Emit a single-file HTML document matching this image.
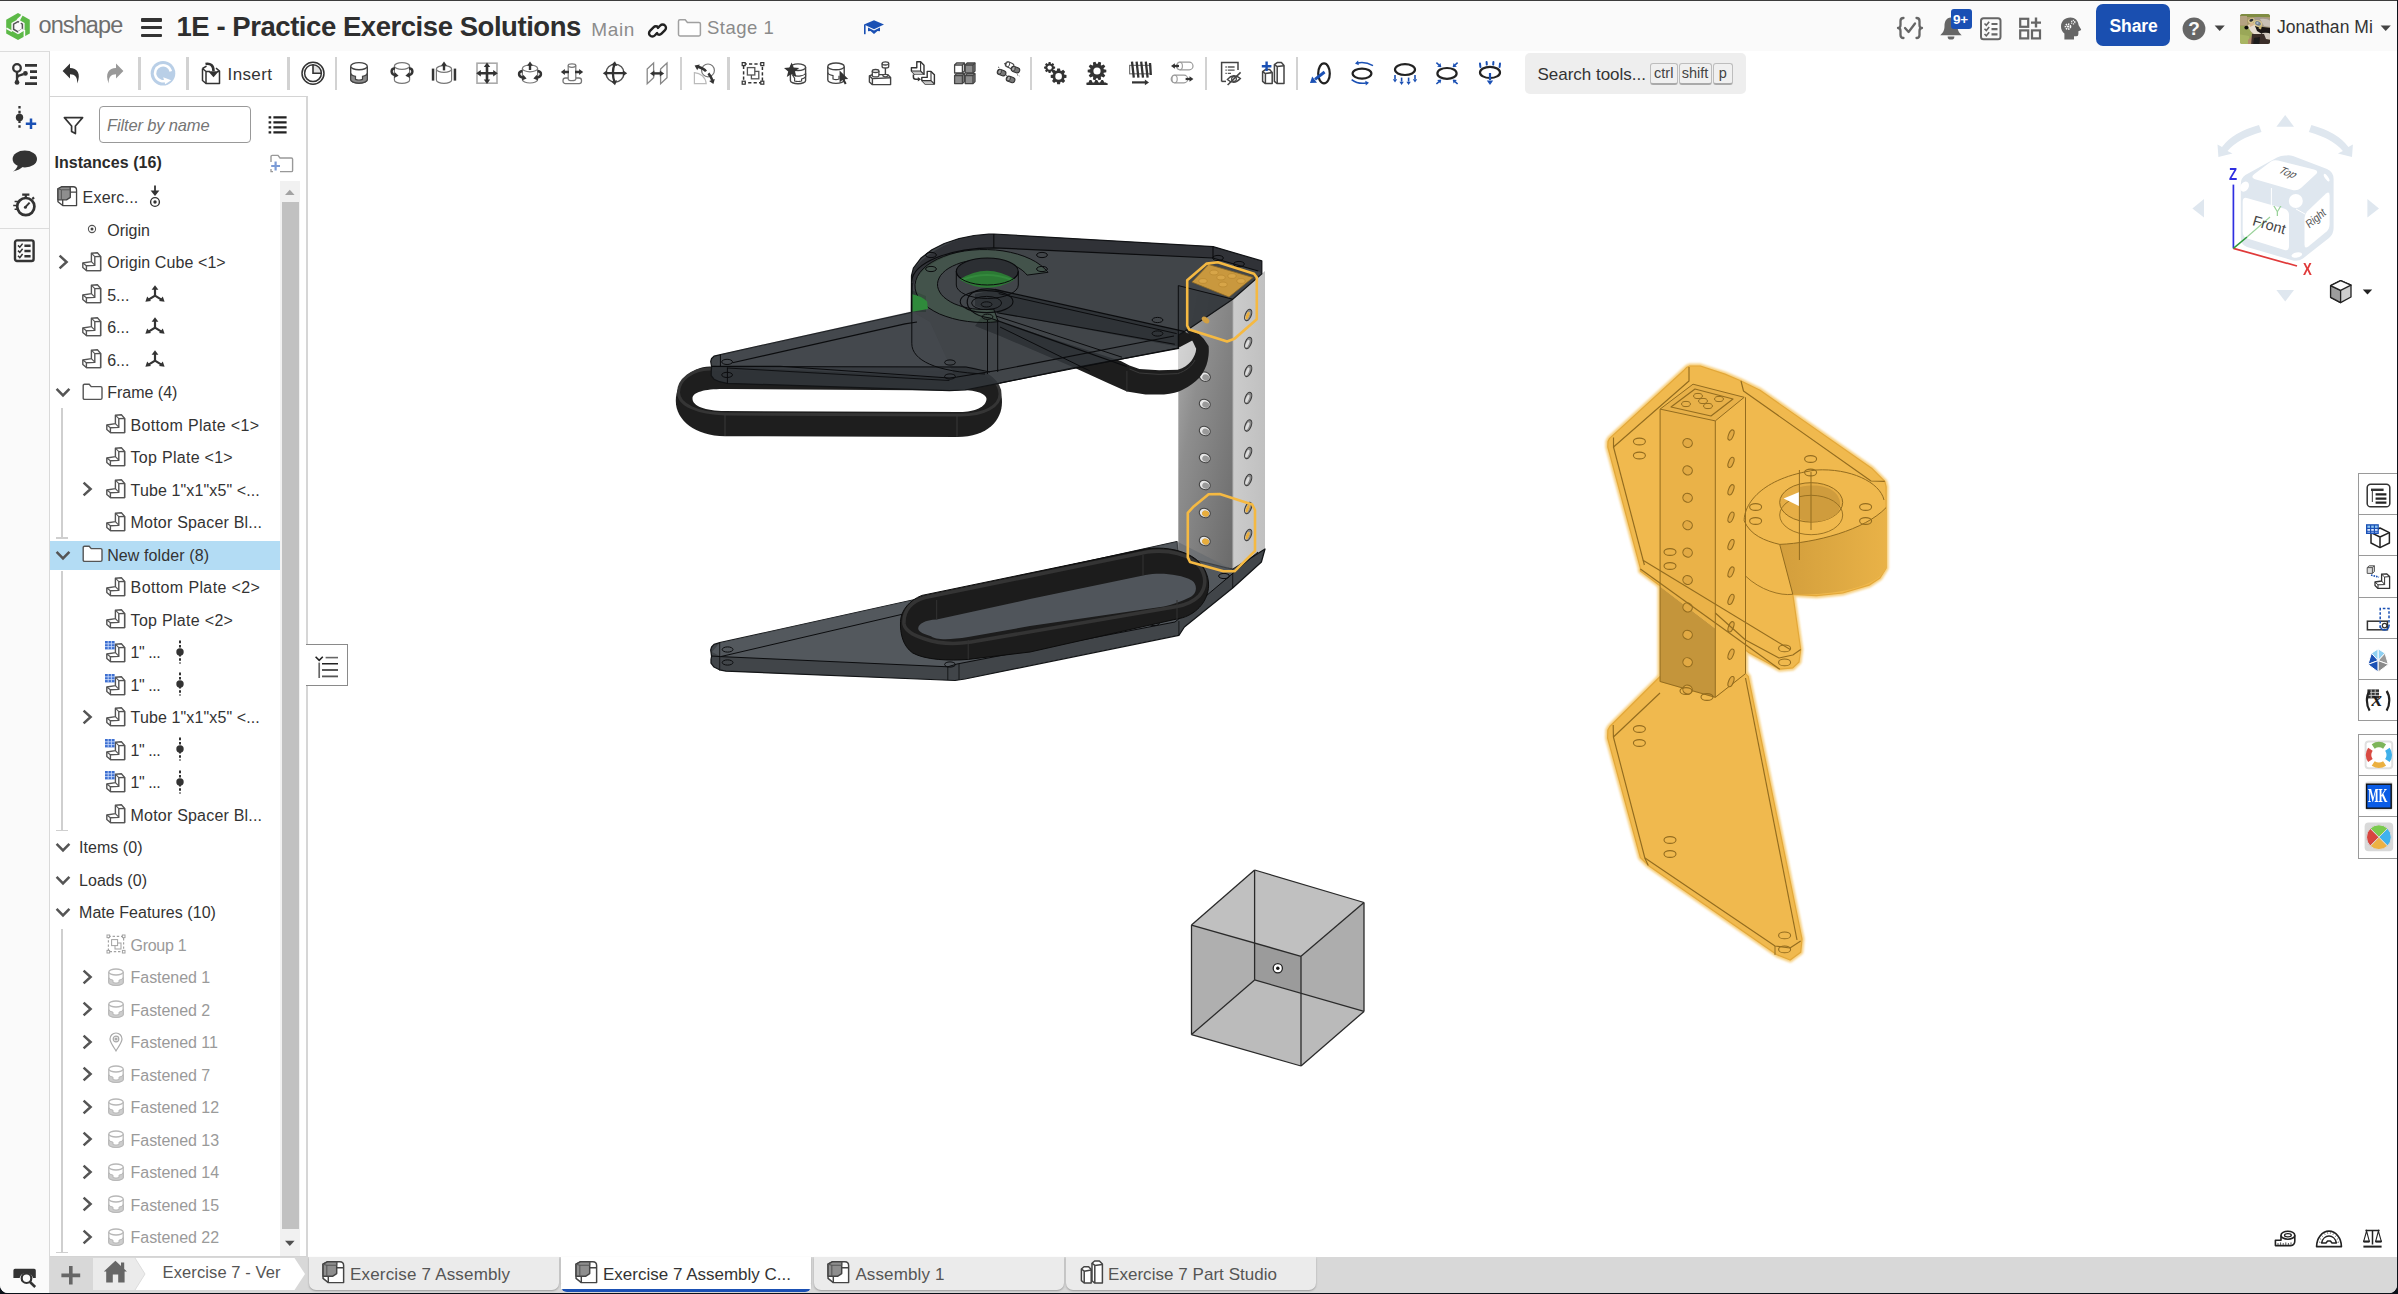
<!DOCTYPE html>
<html><head><meta charset="utf-8"><title>Onshape</title>
<style>
*{box-sizing:border-box;margin:0;padding:0}
html,body{width:2398px;height:1294px;overflow:hidden;background:#0b1119;font-family:"Liberation Sans",sans-serif;}
#win{position:absolute;left:0;top:0;width:2397px;height:1293px;background:#fff;border-radius:0 0 8px 8px;overflow:hidden}
.abs{position:absolute}
.t{position:absolute;white-space:nowrap;line-height:20px;height:20px;color:#333;font-size:16px}
#topline{position:absolute;left:0;top:0;width:2398px;height:1px;background:#3c3c3c}
#hdr{position:absolute;left:0;top:1px;width:2397px;height:50px;background:#fafafa}
#strip{position:absolute;left:0;top:51px;width:50px;height:1242px;background:#fafafa;border-right:1px solid #d9d9d9;border-top:1px solid #dcdcdc}
#toolbar{position:absolute;left:50px;top:51px;width:2347px;height:45px;background:#fff}
#panel{position:absolute;left:50px;top:96px;width:258px;height:1161px;background:#fff;border-top:1px solid #d4d4d4;border-right:2px solid #d6d6d6;border-bottom:1px solid #d4d4d4}
#tabs{position:absolute;left:50px;top:1257px;width:2347px;height:36px;background:#d8d8d8}
.sep{position:absolute;top:57px;height:33px;width:3px;background:#d2d2d2}
.sep2{position:absolute;top:57px;height:33px;width:2px;background:#d2d2d2}
.row{position:absolute;left:0;width:229px;height:32px}
svg{position:absolute;overflow:visible}
.tab{position:absolute;top:1px;height:33px;background:#ebebeb;border-radius:0 0 6px 6px;box-shadow:0 1px 2px rgba(0,0,0,.25)}
.kbd{position:absolute;top:63px;height:22px;border:1px solid #bdbdbd;border-bottom:2px solid #aaa;border-radius:3px;background:#f0f0f0;font-size:14.5px;color:#444;text-align:center;line-height:19px}
</style></head><body>
<div id="win">
<div id="topline"></div>
<div id="hdr"></div>
<div id="toolbar"></div>
<div id="strip"></div>
<div id="panel"></div>
<div id="tabs"></div>
<svg style="left:5px;top:12px" width="26" height="28" viewBox="0 0 26 28">
<polygon points="13,1 24.8,7.8 24.8,21.4 13,28 1.2,21.4 1.2,7.8" fill="#5cb947"/>
<polygon points="13,7.2 19.6,11 19.6,18.4 13,22.2 6.4,18.4 6.4,11" fill="#fafafa"/>
<path d="M13 1 L13 -1 M16.5 3 L13.5 8.5 L11.5 7.5 Z" fill="#fafafa"/>
<path d="M17.2 2.6 L14.2 8" stroke="#fafafa" stroke-width="1.6"/>
<path d="M1.4 16.2 L7 19.4" stroke="#fafafa" stroke-width="1.6"/>
<path d="M19.4 25 L19.4 18" stroke="#fafafa" stroke-width="1.6"/>
<polygon points="13,9.6 17.4,12.1 17.4,17.2 13,19.8 8.6,17.2 8.6,12.1" fill="none" stroke="#555" stroke-width="1.5"/>
<path d="M15.5 9.5 L13 14.5" stroke="#fafafa" stroke-width="2"/>
<path d="M17.8 17.4 L13.5 20.6" stroke="#fafafa" stroke-width="2.2"/>
</svg>
<div class="t" style="left:38.50px;top:13.71px;font-size:23.5px;line-height:23.5px;height:23.5px;color:#6e6e6e;letter-spacing:-0.9px;">onshape</div>
<div class="abs" style="left:141px;top:18px;width:21px;height:3.6px;background:#333;border-radius:1px"></div><div class="abs" style="left:141px;top:25.8px;width:21px;height:3.6px;background:#333;border-radius:1px"></div><div class="abs" style="left:141px;top:33.5px;width:21px;height:3.6px;background:#333;border-radius:1px"></div>
<div class="t" style="left:176.50px;top:13.32px;font-size:27.5px;line-height:27.5px;height:27.5px;color:#2e2e2e;font-weight:bold;letter-spacing:-0.45px;">1E - Practice Exercise Solutions</div>
<div class="t" style="left:591.30px;top:19.92px;font-size:19px;line-height:19px;height:19px;color:#8c8c8c;letter-spacing:0.6px;">Main</div>
<svg style="left:647px;top:19px" width="21" height="20" viewBox="0 0 21 20"><g fill="none" stroke="#222" stroke-width="2.4" stroke-linecap="round">
<path d="M8.6 11.6 L6.2 14 a3.3 3.3 0 0 1 -4.7 -4.7 L5 5.8 a3.3 3.3 0 0 1 4.7 0" transform="translate(1.5,2.5)"/>
<path d="M9.4 6.4 L11.8 4 a3.3 3.3 0 0 1 4.7 4.7 L13 12.2 a3.3 3.3 0 0 1 -4.7 0" transform="translate(1.5,2.5)"/>
</g></svg>
<svg style="left:677px;top:18px" width="25" height="20" viewBox="0 0 25 20"><path d="M1.5 3.2 Q1.5 1.8 3 1.8 L8.2 1.8 L10.4 4.4 L22 4.4 Q23.4 4.4 23.4 5.8 L23.4 16.6 Q23.4 18 22 18 L3 18 Q1.5 18 1.5 16.6 Z" fill="#fff" stroke="#a0a0a0" stroke-width="1.5"/></svg>
<div class="t" style="left:707.00px;top:18.94px;font-size:18.5px;line-height:18.5px;height:18.5px;color:#8a8a8a;letter-spacing:0.5px;">Stage 1</div>
<svg style="left:863px;top:19px" width="22" height="18" viewBox="0 0 22 18"><g fill="#1a50b4"><polygon points="11,1.2 21,5.6 11,10.2 1,5.6"/>
<path d="M5 8.6 L11 11.4 L17 8.6 L17 12.2 L14.5 12 L11 15 L7.5 12 L5 12.2 Z"/>
<rect x="1" y="5.6" width="1.6" height="9.6"/></g></svg>
<svg style="left:1896px;top:16px" width="28" height="25" viewBox="0 0 28 25"><g fill="none" stroke="#666" stroke-width="2.3" stroke-linecap="round" stroke-linejoin="round">
<path d="M7.5 2 Q4.5 2 4.5 5 L4.5 9 Q4.5 12 2 12 Q4.5 12 4.5 15 L4.5 19 Q4.5 22 7.5 22"/>
<path d="M20.5 2 Q23.5 2 23.5 5 L23.5 9 Q23.5 12 26 12 Q23.5 12 23.5 15 L23.5 19 Q23.5 22 20.5 22"/>
<path d="M9 12 L12.6 16 L19 7.5"/></g></svg>
<svg style="left:1939px;top:17px" width="24" height="24" viewBox="0 0 24 24"><path d="M12 0.5 C7 0.5 5.5 5 5.5 9 C5.5 14 3.5 16 1.2 18.2 L22.8 18.2 C20.5 16 18.5 14 18.5 9 C18.5 5 17 0.5 12 0.5 Z" fill="#666"/><path d="M8.6 19.4 a3.4 3.2 0 0 0 6.8 0 Z" fill="#666"/></svg>
<div class="abs" style="left:1951px;top:9px;width:20.5px;height:20px;background:#1a50b4;border-radius:3px"></div><div class="t" style="left:1953.00px;top:13.17px;font-size:13.5px;line-height:13.5px;height:13.5px;color:#fff;font-weight:bold;letter-spacing:-0.3px;">9+</div>
<svg style="left:1979px;top:16px" width="24" height="25" viewBox="0 0 24 25"><g fill="none" stroke="#666" stroke-width="2"><rect x="2" y="2.2" width="19.5" height="21" rx="2.5"/>
<path d="M5.5 7.5 L7.3 9.3 L10.2 5.8 M5.5 12.8 L7.3 14.6 L10.2 11 M5.5 18 L7.3 19.8 L10.2 16.3" stroke-width="1.6"/>
<path d="M12.5 8 L18.5 8 M12.5 13.2 L18.5 13.2 M12.5 18.4 L18.5 18.4" stroke-width="2.2"/></g></svg>
<svg style="left:2018px;top:16px" width="26" height="25" viewBox="0 0 26 25"><g fill="none" stroke="#666" stroke-width="2.2"><rect x="2.2" y="2.8" width="8" height="8"/><rect x="2.2" y="14.4" width="8" height="8"/><rect x="14" y="14.4" width="8" height="8"/>
<path d="M18 1.6 L18 11.6 M13 6.6 L23 6.6" stroke-width="2.4"/></g></svg>
<svg style="left:2059px;top:16px" width="24" height="25" viewBox="0 0 24 25"><path d="M11.5 1.6 C5.6 1.6 2 5.6 2 10.4 C2 13.6 3.4 15.8 5.4 17.4 L5.4 23.4 L15 23.4 L15 20.2 L17.4 20.2 Q19.4 20.2 19.4 18 L19.4 15.2 L21.8 14.2 Q22.4 13.8 22 13.2 L19.6 9.2 C19.2 4.6 16 1.6 11.5 1.6 Z" fill="#666"/>
<circle cx="9" cy="10.6" r="2.5" fill="none" stroke="#fafafa" stroke-width="1.7" stroke-dasharray="1.4 0.9"/><circle cx="9" cy="10.6" r="1.1" fill="#fafafa"/>
<circle cx="14.2" cy="6.2" r="1.7" fill="none" stroke="#fafafa" stroke-width="1.3" stroke-dasharray="1 .7"/></svg>
<div class="abs" style="left:2096px;top:4px;width:73.5px;height:42px;background:#1a4fb0;border-radius:7px"></div><div class="t" style="left:2109.50px;top:17.79px;font-size:17.5px;line-height:17.5px;height:17.5px;color:#fff;font-weight:bold;letter-spacing:-0.1px;">Share</div>
<svg style="left:2182px;top:17px" width="24" height="24" viewBox="0 0 24 24"><circle cx="12" cy="11.8" r="11.4" fill="#666"/></svg>
<div class="t" style="left:2188.20px;top:19.32px;font-size:19px;line-height:19px;height:19px;color:#fafafa;font-weight:bold;">?</div>
<svg style="left:2214px;top:25px" width="12" height="7" viewBox="0 0 12 7"><polygon points="0.6,0.6 10.8,0.6 5.7,6" fill="#444"/></svg>
<div class="abs" style="left:2240px;top:14px;width:30px;height:30px;border-radius:2.5px;overflow:hidden;background:#8a8f55"><svg style="left:0;top:0" width="30" height="30" viewBox="0 0 30 30"><defs><filter id="avb" x="-10%" y="-10%" width="120%" height="120%"><feGaussianBlur stdDeviation="0.75"/></filter></defs>
<g filter="url(#avb)"><rect x="-2" y="-2" width="34" height="34" fill="#a99a6e"/>
<rect x="-2" y="-2" width="34" height="5" fill="#7f8c42"/><rect x="-2" y="2" width="9" height="9" fill="#b5a382"/>
<path d="M-2 12 L8 12 L12 20 L11 32 L-2 32 Z" fill="#9aa758"/><path d="M-2 20 L9 22 L10 32 L-2 32 Z" fill="#a8b562"/><path d="M8 26 L12 22 L12 32 L8 32 Z" fill="#b08a6a"/>
<path d="M13 4 Q20 1.5 31 5 L31 14 L20 12 L14 8 Z" fill="#a59a8d"/><path d="M20 5 Q26 4 31 7 L31 13 L24 12 Z" fill="#c9c0b5"/>
<path d="M8 11 Q12 8 15 10 L18 16 L22 20 L14 20 Q9 17 8 11 Z" fill="#e6dcd0"/><path d="M9 10 L13 8 L14 11 L10 13 Z" fill="#d8b58f"/>
<path d="M15 12 L31 14 L31 20 L22 20 L17 17 Z" fill="#1c1917"/>
<path d="M22 19 Q28 18 31 20 L31 26 L24 25 Z" fill="#d3c9c0"/>
<path d="M12 20 L24 20 L26 25 L31 26 L31 32 L11 32 Z" fill="#3a2e29"/><path d="M14 24 L20 23 L19 32 L13 32 Z" fill="#1f1b1a"/>
<ellipse cx="6.4" cy="13.6" rx="2" ry="1.9" fill="#0c0c0c"/>
<ellipse cx="11.4" cy="6.6" rx="3.4" ry="2.5" fill="#d8c78e" transform="rotate(-20 11.4 6.6)"/><ellipse cx="11.4" cy="6.2" rx="2.1" ry="1.3" fill="#2c2d36" transform="rotate(-20 11.4 6.2)"/>
<ellipse cx="18" cy="9.6" rx="4.4" ry="3.3" fill="#d8c78e" transform="rotate(25 18 9.6)"/><ellipse cx="18" cy="9.4" rx="3" ry="2" fill="#6f7e90" transform="rotate(25 18 9.4)"/><ellipse cx="17.4" cy="9" rx="1.2" ry=".8" fill="#c5d2de"/>
<path d="M19 12 L22 11.6 L21 15.6 L18.6 14.4 Z" fill="#cdb877"/></g></svg></div>
<div class="t" style="left:2277.00px;top:18.99px;font-size:17.5px;line-height:17.5px;height:17.5px;color:#333;letter-spacing:0.05px;">Jonathan Mi</div>
<svg style="left:2380px;top:25px" width="12" height="7" viewBox="0 0 12 7"><polygon points="0.6,0.6 10.8,0.6 5.7,6" fill="#444"/></svg>
<div class="sep" style="left:138px"></div><div class="sep" style="left:185.5px"></div><div class="sep" style="left:287px"></div><div class="sep2" style="left:335px"></div><div class="sep2" style="left:680px"></div><div class="sep2" style="left:1030px"></div><div class="sep2" style="left:1205px"></div><div class="sep2" style="left:1295.5px"></div><div class="sep" style="left:727px"></div>
<svg style="left:58.3px;top:60.0px" width="26" height="26" viewBox="0 0 26 26"><path d="M4.6 11 L12 3.6 L12 8 C19 8 23.5 13.5 19.2 23.5 C19.6 17 17 14.2 12 14.2 L12 18.4 Z" fill="#333"/></svg>
<svg style="left:102.3px;top:60.0px" width="26" height="26" viewBox="0 0 26 26"><path d="M21.4 11 L14 3.6 L14 8 C7 8 2.5 13.5 6.8 23.5 C6.4 17 9 14.2 14 14.2 L14 18.4 Z" fill="#999"/></svg>
<svg style="left:149.5px;top:60.0px" width="26" height="26" viewBox="0 0 26 26"><circle cx="13" cy="13.2" r="12.3" fill="#b9cfe7"/>
<path d="M17.6 19.8 A8 8 0 1 1 20.8 11.4" fill="none" stroke="#fff" stroke-width="2.6"/>
<polygon points="13.2,17.2 21.2,20.2 15.2,24.2" fill="#fff"/></svg>
<svg style="left:197.5px;top:60.0px" width="26" height="26" viewBox="0 0 26 26"><g fill="none" stroke="#333" stroke-width="1.5" stroke-linejoin="round">
<path d="M4.5 8.5 L4.5 20.5 L8 23.5 L21.5 23.5 L21.5 11 L18 8.2" fill="#fff"/>
<path d="M4.5 8.5 L8 11.5 L8 23.5 M8 11.5 L12 11.5 M19 11.5 L21.5 11.5 M4.5 8.5 L8.5 6.2"/>
<path d="M7.5 4 C12.5 3 15.5 5.5 15.5 11" stroke-width="2.6"/></g>
<polygon points="10.2,11.2 20.8,11.2 15.5,17.2" fill="#333"/></svg>
<div class="t" style="left:227.60px;top:66.21px;font-size:17px;line-height:17px;height:17px;color:#333;letter-spacing:0.35px;">Insert</div>
<svg style="left:299.5px;top:60.0px" width="26" height="26" viewBox="0 0 26 26"><circle cx="13" cy="13.2" r="11" fill="#fff" stroke="#333" stroke-width="1.5"/>
<path d="M13 13.2 L13 4.8 A8.4 8.4 0 0 1 21.4 13.2 Z" fill="#e2e2e2"/>
<circle cx="13" cy="13.2" r="8.4" fill="none" stroke="#333" stroke-width="1.5"/>
<path d="M13 4.8 L13 13.2 L21.4 13.2" fill="none" stroke="#333" stroke-width="1.6"/></svg>
<svg style="left:346.3px;top:60.0px" width="26" height="26" viewBox="0 0 26 26"><path d="M4.699999999999999 6.2 L4.699999999999999 19.6 A8.3 3.6 0 0 0 21.3 19.6 L21.3 6.2" fill="#fff" stroke="#444" stroke-width="1.4"/><ellipse cx="13" cy="6.2" rx="8.3" ry="3.6" fill="#fff" stroke="#444" stroke-width="1.4"/>
<path d="M4.7 13 L4.7 19.6 A8.3 3.6 0 0 0 21.3 19.6 L21.3 13 A8.3 3.6 0 0 1 16.5 16.3 L16.5 19.4 Q13 20.6 9.5 19.4 L9.5 16.3 A8.3 3.6 0 0 1 4.7 13 Z" fill="#8a8a8a" stroke="#444" stroke-width="1.2"/></svg>
<svg style="left:389.3px;top:60.0px" width="26" height="26" viewBox="0 0 26 26"><path d="M5.4 6 L5.4 20 A7.6 3.4 0 0 0 20.6 20 L20.6 6" fill="#fff" stroke="#777" stroke-width="1.2"/><ellipse cx="13" cy="6" rx="7.6" ry="3.4" fill="#fff" stroke="#777" stroke-width="1.2"/>
<path d="M6 8.2 C1.5 8.6 1.2 14 6.5 15.2" fill="none" stroke="#333" stroke-width="2.4"/><polygon points="9.6,15.8 5.1,18.0 5.9,12.3" fill="#333"/>
<path d="M20 8.2 C24.5 8.6 24.8 14 19.5 15.2" fill="none" stroke="#333" stroke-width="2.4"/><polygon points="16.4,15.8 20.1,12.3 20.9,18.0" fill="#333"/></svg>
<svg style="left:431.3px;top:60.0px" width="26" height="26" viewBox="0 0 26 26"><path d="M5.4 9 L5.4 20 A7.6 3.4 0 0 0 20.6 20 L20.6 9" fill="#fff" stroke="#777" stroke-width="1.2"/><ellipse cx="13" cy="9" rx="7.6" ry="3.4" fill="#fff" stroke="#777" stroke-width="1.2"/>
<rect x="0.8" y="8.6" width="2.5" height="12" fill="#333"/><rect x="22.7" y="8.6" width="2.5" height="12" fill="#333"/>
<path d="M13 10.4 L13 5" stroke="#333" stroke-width="2.4"/><polygon points="13.0,1.4 16.0,5.8 10.0,5.8" fill="#333"/></svg>
<svg style="left:474.3px;top:60.0px" width="26" height="26" viewBox="0 0 26 26"><rect x="3" y="3.2" width="20" height="20" fill="#fff" stroke="#aaa" stroke-width="1.6"/>
<path d="M13 5 L13 21 M5 13.2 L21 13.2" stroke="#333" stroke-width="2.6"/>
<polygon points="13.0,2.4 16.2,7.0 9.8,7.0" fill="#333"/><polygon points="13.0,24.0 9.8,19.4 16.2,19.4" fill="#333"/><polygon points="2.2,13.2 6.8,10.0 6.8,16.4" fill="#333"/><polygon points="23.8,13.2 19.2,16.4 19.2,10.0" fill="#333"/></svg>
<svg style="left:516.5px;top:60.0px" width="26" height="26" viewBox="0 0 26 26"><path d="M5.4 8.4 L5.4 19.6 A7.6 3.4 0 0 0 20.6 19.6 L20.6 8.4" fill="#fff" stroke="#777" stroke-width="1.2"/><ellipse cx="13" cy="8.4" rx="7.6" ry="3.4" fill="#fff" stroke="#777" stroke-width="1.2"/>
<path d="M13 10 L13 5" stroke="#333" stroke-width="2.4"/><polygon points="13.0,1.4 16.0,5.8 10.0,5.8" fill="#333"/>
<path d="M5.4 11 C0.8 11.6 0.8 16.6 6 17.6" fill="none" stroke="#333" stroke-width="2.4"/><polygon points="9.6,18.6 4.9,20.4 6.3,14.8" fill="#333"/>
<path d="M20.6 11 C25.2 11.6 25.2 16.6 20 17.6" fill="none" stroke="#333" stroke-width="2.4"/><polygon points="16.4,18.6 19.7,14.8 21.1,20.4" fill="#333"/></svg>
<svg style="left:559.3px;top:60.0px" width="26" height="26" viewBox="0 0 26 26"><rect x="4" y="18" width="18.5" height="5.6" rx="2.4" fill="#fff" stroke="#777" stroke-width="1.3"/>
<path d="M9.2 5.6 L9.2 19 A3.8 1.7 0 0 0 16.8 19 L16.8 5.6" fill="#fff" stroke="#777" stroke-width="1.2"/><ellipse cx="13" cy="5.6" rx="3.8" ry="1.7" fill="#fff" stroke="#777" stroke-width="1.2"/>
<path d="M5 12 L10 12 M16 12 L21 12" stroke="#333" stroke-width="2.4"/><polygon points="1.8,12.0 5.9,9.1 5.9,14.9" fill="#333"/><polygon points="24.2,12.0 20.1,14.9 20.1,9.1" fill="#333"/></svg>
<svg style="left:601.5px;top:60.0px" width="26" height="26" viewBox="0 0 26 26"><circle cx="13" cy="13.2" r="9" fill="#fff" stroke="#555" stroke-width="1.4"/>
<path d="M13 3 C10.4 9 10.4 17 13 23.4 M3 13.2 L23 13.2" fill="none" stroke="#333" stroke-width="2.3"/>
<polygon points="13.0,1.2 15.1,6.1 9.2,4.9" fill="#333"/><polygon points="13.0,25.2 9.2,21.5 15.1,20.3" fill="#333"/><polygon points="0.8,13.2 5.2,10.2 5.2,16.2" fill="#333"/><polygon points="25.2,13.2 20.8,16.2 20.8,10.2" fill="#333"/></svg>
<svg style="left:644.0px;top:60.0px" width="26" height="26" viewBox="0 0 26 26"><path d="M3.2 9 L9.6 3 L9.6 17.6 L3.2 23.8 Z M16.6 9 L23 3 L23 17.6 L16.6 23.8 Z" fill="#fff" stroke="#888" stroke-width="1.3"/>
<path d="M9 13.4 L17 13.4" stroke="#333" stroke-width="2.4"/><polygon points="6.0,13.4 10.4,10.4 10.4,16.4" fill="#333"/><polygon points="20.2,13.4 15.8,16.4 15.8,10.4" fill="#333"/></svg>
<svg style="left:691.0px;top:60.0px" width="26" height="26" viewBox="0 0 26 26"><path d="M3.4 23.6 L3.4 12.6 C9.5 13 14.5 17 15.2 23.6 Z" fill="#fff" stroke="#bbb" stroke-width="1.2"/>
<circle cx="17" cy="10.4" r="6.4" fill="none" stroke="#777" stroke-width="1.2"/>
<path d="M7 6.8 C11 8 13.6 9.4 15 11.4 M17.4 13.4 C19.6 16 20.6 18.4 21.4 20.4" fill="none" stroke="#333" stroke-width="2.5"/>
<polygon points="3.6,5.6 8.8,4.6 6.3,10.2" fill="#333"/><polygon points="22.4,24.0 18.1,20.9 23.8,18.9" fill="#333"/></svg>
<svg style="left:739.5px;top:60.0px" width="26" height="26" viewBox="0 0 26 26"><rect x="3.6" y="4" width="18.8" height="18.8" fill="none" stroke="#333" stroke-width="1.5" stroke-dasharray="3.2 2.2"/>
<g fill="#fff" stroke="#333" stroke-width="1.2"><rect x="2.2" y="2.6" width="3" height="3"/><rect x="20.8" y="2.6" width="3" height="3"/><rect x="2.2" y="21.2" width="3" height="3"/><rect x="20.8" y="21.2" width="3" height="3"/></g>
<rect x="11.4" y="11.4" width="7.4" height="7.4" fill="#fff" stroke="#555" stroke-width="1.3"/><rect x="7.4" y="7.6" width="7.4" height="7.4" fill="#fff" stroke="#555" stroke-width="1.3"/></svg>
<svg style="left:781.5px;top:60.0px" width="26" height="26" viewBox="0 0 26 26"><path d="M8.4 7.2 L8.4 20.4 A7.6 3.3 0 0 0 23.6 20.4 L23.6 7.2" fill="#fff" stroke="#444" stroke-width="1.4"/><ellipse cx="16" cy="7.2" rx="7.6" ry="3.3" fill="#fff" stroke="#444" stroke-width="1.4"/>
<path d="M10.5 15 A7.6 3.3 0 0 0 23.6 13 L23.6 16.4 A7.6 3.3 0 0 1 19.6 19 L19.6 21 Q16 22 12.6 21 L12.6 18.2 Z" fill="#fff" stroke="#444" stroke-width="1.2"/>
<polygon points="9.6,2.6 11.7,7.6 17.2,8 13,11.6 14.4,17 9.6,14 4.8,17 6.2,11.6 2,8 7.5,7.6" fill="#333"/></svg>
<svg style="left:824.0px;top:60.0px" width="26" height="26" viewBox="0 0 26 26"><path d="M3.8000000000000007 6.4 L3.8000000000000007 20 A8.2 3.4 0 0 0 20.2 20 L20.2 6.4" fill="#fff" stroke="#444" stroke-width="1.4"/><ellipse cx="12" cy="6.4" rx="8.2" ry="3.4" fill="#fff" stroke="#444" stroke-width="1.4"/>
<path d="M3.8 12.5 A8.2 3.4 0 0 0 9 15.6 L9 19 Q12 20.2 15 19 L15 15.8" fill="none" stroke="#444" stroke-width="1.2"/>
<polygon points="15.6,10.4 15.6,22.6 18.4,20 20.8,24.6 22.6,23.6 20.4,19.2 24.2,19" fill="#333"/></svg>
<svg style="left:866.5px;top:60.0px" width="26" height="26" viewBox="0 0 26 26"><g fill="#fff" stroke="#444" stroke-width="1.4" stroke-linejoin="round"><path d="M2.4 16 L2.4 22 L5.4 24.6 L23.6 24.6 L23.6 17.6 L20.6 14.6 L5.4 14.6 Z"/><path d="M2.4 16 L5.4 18.6 L23.6 17.8 M5.4 18.6 L5.4 24.6"/></g>
<path d="M5.3 11 L5.3 15.4 A3.3 1.5 0 0 0 11.899999999999999 15.4 L11.899999999999999 11" fill="#fff" stroke="#444" stroke-width="1.3"/><ellipse cx="8.6" cy="11" rx="3.3" ry="1.5" fill="#fff" stroke="#444" stroke-width="1.3"/>
<path d="M18.4 8 L18.4 14.4" stroke="#444" stroke-width="1.4"/><ellipse cx="18.4" cy="15.6" rx="2.6" ry="1.2" fill="#fff" stroke="#444" stroke-width="1.2"/>
<path d="M15.099999999999998 3.4 L15.099999999999998 6.4 A3.3 1.6 0 0 0 21.7 6.4 L21.7 3.4" fill="#fff" stroke="#444" stroke-width="1.3"/><ellipse cx="18.4" cy="3.4" rx="3.3" ry="1.6" fill="#fff" stroke="#444" stroke-width="1.3"/></svg>
<svg style="left:909.5px;top:60.0px" width="26" height="26" viewBox="0 0 26 26"><g transform="translate(0.6,1)" stroke="#333" stroke-width="1.4" stroke-linejoin="round"><path d="M6.2 0.8 L10 0.8 L13.4 4.2 L13.4 13.4 L4.2 13.4 L0.8 10 L0.8 6.8 L6.2 6.8 Z" fill="#fff"/><path d="M10 10 L13.4 13.4 L4.2 13.4 L0.8 10 Z" fill="#c4c4c4" stroke="none"/><path d="M10 0.8 L10 10 L0.8 10 M10 10 L13.4 13.4" fill="none" stroke-width="1.1"/></g><g transform="translate(11,10.6)" stroke="#333" stroke-width="1.4" stroke-linejoin="round"><path d="M6.2 0.8 L10 0.8 L13.4 4.2 L13.4 13.4 L4.2 13.4 L0.8 10 L0.8 6.8 L6.2 6.8 Z" fill="#fff"/><path d="M10 10 L13.4 13.4 L4.2 13.4 L0.8 10 Z" fill="#c4c4c4" stroke="none"/><path d="M10 0.8 L10 10 L0.8 10 M10 10 L13.4 13.4" fill="none" stroke-width="1.1"/></g>
<path d="M3.4 14.4 L3.4 17 Q3.4 19.2 5.6 19.2 L8 19.2" fill="none" stroke="#333" stroke-width="1.5"/><polygon points="11.0,19.2 7.8,21.4 7.8,17.0" fill="#333"/></svg>
<svg style="left:951.5px;top:60.0px" width="26" height="26" viewBox="0 0 26 26"><g transform="translate(2,2.4)" stroke="#444" stroke-width="1.3" stroke-linejoin="round"><path d="M0.6 2.6 L2.6 0.6 L10.4 0.6 L10.4 8.6 L8.4 10.6 L0.6 10.6 Z" fill="#fff"/><path d="M0.6 2.6 L8.4 2.6 L10.4 0.6 M8.4 2.6 L8.4 10.6" fill="none"/></g><g transform="translate(12.6,2.4)" stroke="#444" stroke-width="1.3" stroke-linejoin="round"><path d="M0.6 2.6 L2.6 0.6 L10.4 0.6 L10.4 8.6 L8.4 10.6 L0.6 10.6 Z" fill="#8c8c8c"/><path d="M0.6 2.6 L8.4 2.6 L10.4 0.6 M8.4 2.6 L8.4 10.6" fill="none"/></g><g transform="translate(2,13)" stroke="#444" stroke-width="1.3" stroke-linejoin="round"><path d="M0.6 2.6 L2.6 0.6 L10.4 0.6 L10.4 8.6 L8.4 10.6 L0.6 10.6 Z" fill="#8c8c8c"/><path d="M0.6 2.6 L8.4 2.6 L10.4 0.6 M8.4 2.6 L8.4 10.6" fill="none"/></g><g transform="translate(12.6,13)" stroke="#444" stroke-width="1.3" stroke-linejoin="round"><path d="M0.6 2.6 L2.6 0.6 L10.4 0.6 L10.4 8.6 L8.4 10.6 L0.6 10.6 Z" fill="#8c8c8c"/><path d="M0.6 2.6 L8.4 2.6 L10.4 0.6 M8.4 2.6 L8.4 10.6" fill="none"/></g></svg>
<svg style="left:994.5px;top:60.0px" width="26" height="26" viewBox="0 0 26 26"><g transform="translate(14.6,5.2) rotate(25)"><rect x="-4.4" y="-2.6" width="8.8" height="5.2" rx="2.6" fill="#fff" stroke="#444" stroke-width="1.1"/><ellipse cx="-2" cy="0" rx="1.7" ry="2.4" fill="#fff" stroke="#444" stroke-width=".9"/></g>
<g transform="translate(6.6,12.6) rotate(20)"><rect x="-4.4" y="-2.6" width="8.8" height="5.2" rx="2.6" fill="#777" stroke="#333" stroke-width="1.1"/><ellipse cx="-2.2" cy="0" rx="1.7" ry="2.4" fill="#aaa" stroke="#333" stroke-width=".9"/></g><g transform="translate(20.4,9.6) rotate(20)"><rect x="-4.4" y="-2.6" width="8.8" height="5.2" rx="2.6" fill="#777" stroke="#333" stroke-width="1.1"/><ellipse cx="-2.2" cy="0" rx="1.7" ry="2.4" fill="#aaa" stroke="#333" stroke-width=".9"/></g><g transform="translate(15.6,19.4) rotate(20)"><rect x="-4.4" y="-2.6" width="8.8" height="5.2" rx="2.6" fill="#777" stroke="#333" stroke-width="1.1"/><ellipse cx="-2.2" cy="0" rx="1.7" ry="2.4" fill="#aaa" stroke="#333" stroke-width=".9"/></g>
<path d="M3 7 L5 8 M11 15 L13.4 16.4 M22 14.6 L24.4 16 M9 3.4 L10.4 4.2" stroke="#555" stroke-width="1" stroke-dasharray="1.4 1"/></svg>
<svg style="left:1041.5px;top:60.0px" width="26" height="26" viewBox="0 0 26 26"><polygon points="11.53,6.28 13.12,6.64 13.12,8.56 11.53,8.92 11.31,9.44 12.18,10.82 10.82,12.18 9.44,11.31 8.92,11.53 8.56,13.12 6.64,13.12 6.28,11.53 5.76,11.31 4.38,12.18 3.02,10.82 3.89,9.44 3.67,8.92 2.08,8.56 2.08,6.64 3.67,6.28 3.89,5.76 3.02,4.38 4.38,3.02 5.76,3.89 6.28,3.67 6.64,2.08 8.56,2.08 8.92,3.67 9.44,3.89 10.82,3.02 12.18,4.38 11.31,5.76" fill="#333"/><circle cx="7.6" cy="7.6" r="2.2" fill="#fff"/><polygon points="22.21,14.52 24.48,15.02 24.48,17.78 22.21,18.28 21.90,19.04 23.15,21.00 21.20,22.95 19.24,21.70 18.48,22.01 17.98,24.28 15.22,24.28 14.72,22.01 13.96,21.70 12.00,22.95 10.05,21.00 11.30,19.04 10.99,18.28 8.72,17.78 8.72,15.02 10.99,14.52 11.30,13.76 10.05,11.80 12.00,9.85 13.96,11.10 14.72,10.79 15.22,8.52 17.98,8.52 18.48,10.79 19.24,11.10 21.20,9.85 23.15,11.80 21.90,13.76" fill="#333"/><circle cx="16.6" cy="16.4" r="3.3" fill="#fff"/></svg>
<svg style="left:1084.0px;top:60.0px" width="26" height="26" viewBox="0 0 26 26"><polygon points="19.72,9.22 22.31,9.70 22.31,12.30 19.72,12.78 19.49,13.51 21.29,15.42 19.77,17.52 17.39,16.39 16.77,16.84 17.11,19.45 14.65,20.25 13.38,17.95 12.62,17.95 11.35,20.25 8.89,19.45 9.23,16.84 8.61,16.39 6.23,17.52 4.71,15.42 6.51,13.51 6.28,12.78 3.69,12.30 3.69,9.70 6.28,9.22 6.51,8.49 4.71,6.58 6.23,4.48 8.61,5.61 9.23,5.16 8.89,2.55 11.35,1.75 12.62,4.05 13.38,4.05 14.65,1.75 17.11,2.55 16.77,5.16 17.39,5.61 19.77,4.48 21.29,6.58 19.49,8.49" fill="#333"/><circle cx="13" cy="11" r="3.6" fill="#fff"/><path d="M2.6 24.6 L2.6 22.4 L4.4 22.4 L5.6 20 L7.4 20 L8.6 22.4 L10.2 22.4 L11.4 20 L13.2 20 L14.6 22.4 L16 22.4 L17.4 20 L19 20 L20.4 22.4 L22 22.4 L23.4 24.6 Z" fill="#333"/><rect x="2.6" y="23.2" width="21" height="1.8" fill="#333"/></svg>
<svg style="left:1126.5px;top:60.0px" width="26" height="26" viewBox="0 0 26 26"><rect x="2.6" y="5.4" width="21" height="8.4" fill="#fff" stroke="#777" stroke-width="1.2"/>
<path d="M5 1.6 L6.8 17.6 M9.6 1.6 L11.4 17.6 M14.2 1.6 L16 17.6 M18.8 1.6 L20.6 17.6 M23 3 L23.8 15" stroke="#333" stroke-width="2.3"/>
<path d="M5 22.4 L18 22.4" stroke="#333" stroke-width="2.2"/><polygon points="22.0,22.4 17.9,25.3 17.9,19.5" fill="#333"/></svg>
<svg style="left:1169.0px;top:60.0px" width="26" height="26" viewBox="0 0 26 26"><rect x="7.4" y="2.2" width="16.6" height="7.6" rx="3.8" fill="#fff" stroke="#999" stroke-width="1.2"/><ellipse cx="10.8" cy="6.0" rx="2.6" ry="3.8" fill="#fff" stroke="#999" stroke-width="1.1"/><rect x="2.2" y="15.2" width="16.6" height="7.6" rx="3.8" fill="#fff" stroke="#999" stroke-width="1.2"/><ellipse cx="5.6" cy="19.0" rx="2.6" ry="3.8" fill="#fff" stroke="#999" stroke-width="1.1"/>
<path d="M5 6 L10 6" stroke="#333" stroke-width="2.2"/><polygon points="2.0,6.0 5.9,3.3 5.9,8.7" fill="#333"/>
<path d="M16.6 19 L21 19" stroke="#333" stroke-width="2.2"/><polygon points="24.4,19.0 20.5,21.7 20.5,16.3" fill="#333"/></svg>
<svg style="left:1217.5px;top:60.0px" width="26" height="26" viewBox="0 0 26 26"><path d="M3.6 21.4 L3.6 2.4 L20 2.4 L20 10" fill="none" stroke="#444" stroke-width="1.5"/><path d="M3.6 21.4 L8 21.4" stroke="#444" stroke-width="1.5"/>
<path d="M7.4 7 L16.6 7 M7.4 10.2 L16.6 10.2 M7.4 13.4 L13 13.4" stroke="#555" stroke-width="1.3" stroke-dasharray="1.4 1 20"/>
<path d="M9.4 19.4 Q15.6 12.4 22.4 18.6 Q16 25.4 9.4 19.4 Z" fill="#fff" stroke="#444" stroke-width="1.4"/><circle cx="16" cy="19" r="2.4" fill="none" stroke="#444" stroke-width="1.2"/>
<path d="M9.6 25 L22.6 12.4" stroke="#444" stroke-width="1.5"/></svg>
<svg style="left:1259.5px;top:60.0px" width="26" height="26" viewBox="0 0 26 26"><g fill="#fff" stroke="#444" stroke-width="1.5" stroke-linejoin="round">
<path d="M14.4 4.6 L17.2 2.6 L21.4 2.6 L24 5.6 L24 23.6 L17.2 23.6 L14.4 21.4 Z"/><path d="M14.4 4.6 L17.2 6.6 L24 5.8 M17.2 6.6 L17.2 23.6" fill="none"/>
<path d="M2.6 11.6 L5.4 9.6 L9.6 9.6 L12.2 12.4 L12.2 23.6 L5.4 23.6 L2.6 21.4 Z"/><path d="M2.6 11.6 L5.4 13.6 L12.2 12.6 M5.4 13.6 L5.4 23.6" fill="none"/></g>
<path d="M6.6 1.4 L6.6 11 M1.8 6.2 L11.4 6.2" stroke="#1a50b4" stroke-width="2.4"/></svg>
<svg style="left:1307.0px;top:60.0px" width="26" height="26" viewBox="0 0 26 26"><ellipse cx="17" cy="13.4" rx="5.8" ry="10" fill="none" stroke="#222" stroke-width="2.2"/>
<path d="M17.6 12 L8 19.4" stroke="#1a50b4" stroke-width="3"/><polygon points="3.0,23.0 5.2,16.4 10.0,22.8" fill="#1a50b4"/></svg>
<svg style="left:1349.0px;top:60.0px" width="26" height="26" viewBox="0 0 26 26"><ellipse cx="13" cy="13.6" rx="9.4" ry="5" fill="none" stroke="#222" stroke-width="2.2"/>
<path d="M24 5.6 Q16 1.2 8.6 3" fill="none" stroke="#1a50b4" stroke-width="1.5"/><polygon points="6.0,3.4 9.1,0.5 9.8,5.3" fill="#1a50b4"/>
<path d="M2.6 19.6 Q9 24.4 17 23" fill="none" stroke="#1a50b4" stroke-width="1.5"/><polygon points="20.0,22.8 16.8,25.5 16.3,20.8" fill="#1a50b4"/></svg>
<svg style="left:1391.5px;top:60.0px" width="26" height="26" viewBox="0 0 26 26"><ellipse cx="13" cy="9.6" rx="10" ry="5.4" fill="none" stroke="#222" stroke-width="2.2"/><path d="M3 15 L3 19" stroke="#1a50b4" stroke-width="1.6"/><polygon points="3.0,22.4 0.8,19.2 5.2,19.2" fill="#1a50b4"/><path d="M9.6 17.6 L9.6 21.6" stroke="#1a50b4" stroke-width="1.6"/><polygon points="9.6,25.0 7.4,21.8 11.8,21.8" fill="#1a50b4"/><path d="M16.6 17.6 L16.6 21.6" stroke="#1a50b4" stroke-width="1.6"/><polygon points="16.6,25.0 14.4,21.8 18.8,21.8" fill="#1a50b4"/><path d="M23 15 L23 19" stroke="#1a50b4" stroke-width="1.6"/><polygon points="23.0,22.4 20.8,19.2 25.2,19.2" fill="#1a50b4"/></svg>
<svg style="left:1434.0px;top:60.0px" width="26" height="26" viewBox="0 0 26 26"><ellipse cx="13" cy="13.4" rx="9.6" ry="5.4" fill="none" stroke="#222" stroke-width="2.2"/>
<path d="M2.4 2.6 L5 5 M23.6 2.6 L21 5 M2.4 24 L5 21.6 M23.6 24 L21 21.6" stroke="#1a50b4" stroke-width="1.6"/>
<polygon points="7.4,7.2 3.2,6.7 6.4,3.1" fill="#1a50b4"/><polygon points="18.6,7.2 19.6,3.1 22.8,6.7" fill="#1a50b4"/><polygon points="7.4,19.4 6.4,23.5 3.2,19.9" fill="#1a50b4"/><polygon points="18.6,19.4 22.8,19.9 19.6,23.5" fill="#1a50b4"/></svg>
<svg style="left:1476.5px;top:60.0px" width="26" height="26" viewBox="0 0 26 26"><ellipse cx="13" cy="12.4" rx="10" ry="5.6" fill="none" stroke="#222" stroke-width="2.2"/>
<path d="M3 3.6 L3.4 7 M9.6 2 L9.8 4.6 M16.4 2 L16.2 4.6 M23 3.6 L22.6 7" stroke="#1a50b4" stroke-width="2" stroke-linecap="round"/>
<path d="M13 13 L13 20" stroke="#1a50b4" stroke-width="2.2"/><polygon points="13.0,25.0 9.8,20.4 16.2,20.4" fill="#1a50b4"/></svg>
<div class="abs" style="left:1525px;top:53px;width:220.5px;height:41px;background:#eee;border-radius:5px"></div><div class="t" style="left:1537.50px;top:66.21px;font-size:17px;line-height:17px;height:17px;color:#333;letter-spacing:-0.02px;">Search tools...</div>
<div class="kbd" style="left:1650px;width:27.5px">ctrl</div><div class="kbd" style="left:1678.5px;width:33px">shift</div><div class="kbd" style="left:1712.5px;width:20.5px">p</div>
<svg style="left:10px;top:60px" width="30" height="28" viewBox="0 0 30 28"><g fill="none" stroke="#333" stroke-width="2.3"><circle cx="7" cy="8" r="3.8"/><path d="M7 12 L7 21 M7 18.5 Q7 15.5 10.5 15.2 L13.5 14.2"/>
<path d="M15 5.4 L27 5.4 M20 11.6 L27 11.6 M20 17.6 L27 17.6 M15 23.6 L27 23.6" stroke-width="2.6"/></g>
<circle cx="7" cy="22.4" r="2.4" fill="#333"/><circle cx="15.4" cy="13.4" r="2.4" fill="#333"/></svg>
<svg style="left:10px;top:104px" width="30" height="28" viewBox="0 0 30 28"><path d="M9.5 2 L9.5 25" stroke="#333" stroke-width="2.3" stroke-dasharray="2.6 2.2"/><circle cx="9.5" cy="13.4" r="3.7" fill="#333"/>
<path d="M21 14.6 L21 25 M15.8 19.8 L26.2 19.8" stroke="#1a50b4" stroke-width="2.5"/></svg>
<svg style="left:10px;top:148px" width="30" height="26" viewBox="0 0 30 26"><ellipse cx="14.8" cy="11" rx="12.2" ry="8.5" fill="#333"/><path d="M8 16.5 Q7 21 3 23.6 Q10 22 13 18.6 Z" fill="#333"/></svg>
<svg style="left:10px;top:192px" width="30" height="28" viewBox="0 0 30 28"><circle cx="15.8" cy="14.6" r="8.6" fill="none" stroke="#333" stroke-width="2.7"/>
<path d="M12.2 2.6 L19.4 2.6 M15.8 2.6 L15.8 6 M22.4 7 L24 5.4" stroke="#333" stroke-width="2.2"/>
<path d="M15.4 15.2 L19.6 10.6" stroke="#333" stroke-width="2"/><circle cx="15.4" cy="15.2" r="1.5" fill="#333"/>
<path d="M4.6 9.6 L9.6 9.6 M3.2 13.4 L7.8 13.4 M4.6 17.2 L8.6 17.2" stroke="#333" stroke-width="1.5"/></svg>
<div class="abs" style="left:0;top:227.5px;width:49px;height:1.5px;background:#dcdcdc"></div><svg style="left:12px;top:237px" width="26" height="27" viewBox="0 0 26 27"><g fill="none" stroke="#333"><rect x="3" y="3.4" width="18.6" height="20.6" rx="2" stroke-width="2.4"/>
<path d="M6 8.4 L7.8 10.2 L10.6 6.6 M6 13.6 L7.8 15.4 L10.6 11.8 M6 18.8 L7.8 20.6 L10.6 17" stroke-width="1.5"/>
<path d="M12.4 8.8 L18.6 8.8 M12.4 14 L18.6 14 M12.4 19.2 L18.6 19.2" stroke-width="2.4"/></g></svg>
<svg style="left:10px;top:1264px" width="30" height="26" viewBox="0 0 30 26"><path d="M3.4 6.4 Q3.4 4.8 5 4.8 L24.2 4.8 Q25.8 4.8 25.8 6.4 L25.8 14 L23 14 A7 7 0 0 0 9.6 14 L3.4 14 Z" fill="#333"/>
<circle cx="16.5" cy="14.2" r="4.8" fill="none" stroke="#333" stroke-width="2.2"/><path d="M20 18 L25.2 23" stroke="#333" stroke-width="2.6"/></svg>
<svg style="left:62px;top:115px" width="24" height="22" viewBox="0 0 24 22"><path d="M2.4 2.6 L20.6 2.6 L13.4 11 L13.4 18.6 L9.6 16.4 L9.6 11 Z" fill="none" stroke="#333" stroke-width="1.7" stroke-linejoin="round"/></svg>
<div class="abs" style="left:98.8px;top:105.8px;width:152.2px;height:36.8px;border:1px solid #999;border-radius:4px;background:#fff"></div><div class="t" style="left:107.00px;top:116.63px;font-size:16.5px;line-height:16.5px;height:16.5px;color:#757575;letter-spacing:-0.15px;font-style:italic;">Filter by name</div>
<svg style="left:267px;top:114px" width="22" height="22" viewBox="0 0 22 22"><g stroke="#222" stroke-width="2.3"><path d="M6.4 3.4 L19.6 3.4 M6.4 8.4 L19.6 8.4 M6.4 13.4 L19.6 13.4 M6.4 18.4 L19.6 18.4"/><path d="M1.6 3.4 L4.2 3.4 M1.6 8.4 L4.2 8.4 M1.6 13.4 L4.2 13.4 M1.6 18.4 L4.2 18.4"/></g></svg>
<div class="t" style="left:54.40px;top:155.46px;font-size:16px;line-height:16px;height:16px;color:#2b2b2b;font-weight:bold;letter-spacing:0.05px;">Instances (16)</div>
<svg style="left:268px;top:153px" width="28" height="22" viewBox="0 0 28 22"><path d="M3 9 L3 3.6 Q3 2.4 4.2 2.4 L10 2.4 L12 5 L23.4 5 Q24.6 5 24.6 6.2 L24.6 17.4 Q24.6 18.6 23.4 18.6 L12 18.6" fill="none" stroke="#999" stroke-width="1.4"/>
<path d="M3 16 L3 18.6 L5 18.6" fill="none" stroke="#999" stroke-width="1.3"/>
<path d="M7.6 8.6 L7.6 17.4 M3.2 13 L12 13" stroke="#7b9bd6" stroke-width="2.2"/></svg>
<div class="abs" style="left:280px;top:181px;width:20px;height:1075px;background:#f1f1f1"></div><div class="abs" style="left:281.5px;top:202px;width:17px;height:1027px;background:#c1c1c1"></div><svg style="left:284px;top:189px" width="12" height="7" viewBox="0 0 12 7"><polygon points="1,6 5.8,0.8 10.6,6" fill="#a3a3a3"/></svg>
<svg style="left:284px;top:1240px" width="12" height="7" viewBox="0 0 12 7"><polygon points="1,0.8 10.6,0.8 5.8,6" fill="#505050"/></svg>
<div class="abs" style="left:50px;top:540.5px;width:229.5px;height:29.5px;background:#b3dcf4"></div><div class="abs" style="left:61.3px;top:408px;width:1.4px;height:130px;background:#cfcfcf"></div><div class="abs" style="left:56px;top:537.3px;width:12px;height:1.4px;background:#cfcfcf"></div><div class="abs" style="left:61.3px;top:571px;width:1.4px;height:259.5px;background:#cfcfcf"></div><div class="abs" style="left:56px;top:829.8px;width:12px;height:1.4px;background:#cfcfcf"></div><div class="abs" style="left:61.3px;top:928.5px;width:1.4px;height:324.0px;background:#cfcfcf"></div><div class="abs" style="left:56px;top:1251.8px;width:12px;height:1.4px;background:#cfcfcf"></div>
<svg style="left:56.5px;top:185.65px" width="20.9" height="20.9" viewBox="0 0 22 22"><g stroke="#444" stroke-width="1.4" stroke-linejoin="round">
<path d="M1 3 L5 0.8 L17 0.8 Q20.6 0.8 20.6 4.4 L20.6 20.6 L6 20.6 L1 16.6 Z" fill="#fff"/>
<path d="M1 3 L6 6.4 L6 20.6 M6 6.4 L20.4 6.4" fill="none"/>
<path d="M1 3 L5 0.8 L14 0.8 L14 12 L10 14.6 L1 14.6 Z" fill="#8e8e8e"/><path d="M4.6 4 L14 4 M4.6 4 L4.6 14.4 M1 3 L4.6 4 M14 0.8 L14 4" fill="none" stroke-width="1" stroke="#555"/></g></svg>
<div class="t" style="left:82.60px;top:190.06px;font-size:16px;line-height:16px;height:16px;color:#333;letter-spacing:0.2px;">Exerc...</div>
<svg style="left:148.5px;top:184.6px" width="12" height="24" viewBox="0 0 12 24"><path d="M6 0.6 L6 7" stroke="#333" stroke-width="1.8"/><polygon points="1.6,5.6 10.4,5.6 6,11" fill="#333"/>
<circle cx="6" cy="17" r="4.4" fill="#fff" stroke="#333" stroke-width="1.4"/><circle cx="6" cy="17" r="1.7" fill="#333"/></svg>
<svg style="left:86.5px;top:224.1px" width="10" height="10" viewBox="0 0 10 10"><circle cx="5" cy="5" r="3.6" fill="#fff" stroke="#555" stroke-width="1.1"/><circle cx="5" cy="5" r="1.5" fill="#444"/></svg>
<div class="t" style="left:107.20px;top:222.56px;font-size:16px;line-height:16px;height:16px;color:#333;">Origin</div>
<svg style="left:57.5px;top:253.60000000000002px" width="11" height="16" viewBox="0 0 11 16"><path d="M1.6 1.6 L8.6 8 L1.6 14.4" fill="none" stroke="#555" stroke-width="2.5"/></svg>
<svg style="left:82px;top:251.60000000000002px" width="20" height="20" viewBox="0 0 20 20"><g opacity="1" stroke="#555" stroke-width="1.4" stroke-linejoin="round" fill="#fff">
<path d="M9.4 1.2 L15.4 0.8 L18.6 4.4 L18.6 18.6 L4.4 18.6 L0.8 15.4 L0.8 11 L9.4 9.6 Z"/>
<path d="M12.8 4.6 L18.6 4.4 L18.6 18.6 L4.4 18.6 L4.4 13.8 L12.8 13.4 Z" fill="#fff"/>
<path d="M9.4 1.2 L12.8 4.6 M0.8 11 L4.4 13.8 M9.4 9.6 L12.8 13.2" fill="none" stroke-width="1.1199999999999999"/></g></svg>
<div class="t" style="left:107.20px;top:255.06px;font-size:16px;line-height:16px;height:16px;color:#333;letter-spacing:0.08px;">Origin Cube &lt;1&gt;</div>
<svg style="left:82px;top:284.1px" width="20" height="20" viewBox="0 0 20 20"><g opacity="1" stroke="#555" stroke-width="1.4" stroke-linejoin="round" fill="#fff">
<path d="M9.4 1.2 L15.4 0.8 L18.6 4.4 L18.6 18.6 L4.4 18.6 L0.8 15.4 L0.8 11 L9.4 9.6 Z"/>
<path d="M12.8 4.6 L18.6 4.4 L18.6 18.6 L4.4 18.6 L4.4 13.8 L12.8 13.4 Z" fill="#fff"/>
<path d="M9.4 1.2 L12.8 4.6 M0.8 11 L4.4 13.8 M9.4 9.6 L12.8 13.2" fill="none" stroke-width="1.1199999999999999"/></g></svg>
<div class="t" style="left:107.20px;top:287.56px;font-size:16px;line-height:16px;height:16px;color:#333;">5...</div>
<svg style="left:144.5px;top:284.6px" width="20" height="18" viewBox="0 0 20 18"><path d="M10 3 L10 10.6 L3.6 14.6 M10 10.6 L16.4 14.6" fill="none" stroke="#333" stroke-width="2.2"/>
<polygon points="10,0.2 13.4,4.8 6.6,4.8" fill="#333"/><polygon points="0.4,16.8 2.2,11.6 6,16" fill="#333"/><polygon points="19.6,16.8 17.8,11.6 14,16" fill="#333"/></svg>
<svg style="left:82px;top:316.6px" width="20" height="20" viewBox="0 0 20 20"><g opacity="1" stroke="#555" stroke-width="1.4" stroke-linejoin="round" fill="#fff">
<path d="M9.4 1.2 L15.4 0.8 L18.6 4.4 L18.6 18.6 L4.4 18.6 L0.8 15.4 L0.8 11 L9.4 9.6 Z"/>
<path d="M12.8 4.6 L18.6 4.4 L18.6 18.6 L4.4 18.6 L4.4 13.8 L12.8 13.4 Z" fill="#fff"/>
<path d="M9.4 1.2 L12.8 4.6 M0.8 11 L4.4 13.8 M9.4 9.6 L12.8 13.2" fill="none" stroke-width="1.1199999999999999"/></g></svg>
<div class="t" style="left:107.20px;top:320.06px;font-size:16px;line-height:16px;height:16px;color:#333;">6...</div>
<svg style="left:144.5px;top:317.1px" width="20" height="18" viewBox="0 0 20 18"><path d="M10 3 L10 10.6 L3.6 14.6 M10 10.6 L16.4 14.6" fill="none" stroke="#333" stroke-width="2.2"/>
<polygon points="10,0.2 13.4,4.8 6.6,4.8" fill="#333"/><polygon points="0.4,16.8 2.2,11.6 6,16" fill="#333"/><polygon points="19.6,16.8 17.8,11.6 14,16" fill="#333"/></svg>
<svg style="left:82px;top:349.1px" width="20" height="20" viewBox="0 0 20 20"><g opacity="1" stroke="#555" stroke-width="1.4" stroke-linejoin="round" fill="#fff">
<path d="M9.4 1.2 L15.4 0.8 L18.6 4.4 L18.6 18.6 L4.4 18.6 L0.8 15.4 L0.8 11 L9.4 9.6 Z"/>
<path d="M12.8 4.6 L18.6 4.4 L18.6 18.6 L4.4 18.6 L4.4 13.8 L12.8 13.4 Z" fill="#fff"/>
<path d="M9.4 1.2 L12.8 4.6 M0.8 11 L4.4 13.8 M9.4 9.6 L12.8 13.2" fill="none" stroke-width="1.1199999999999999"/></g></svg>
<div class="t" style="left:107.20px;top:352.56px;font-size:16px;line-height:16px;height:16px;color:#333;">6...</div>
<svg style="left:144.5px;top:349.6px" width="20" height="18" viewBox="0 0 20 18"><path d="M10 3 L10 10.6 L3.6 14.6 M10 10.6 L16.4 14.6" fill="none" stroke="#333" stroke-width="2.2"/>
<polygon points="10,0.2 13.4,4.8 6.6,4.8" fill="#333"/><polygon points="0.4,16.8 2.2,11.6 6,16" fill="#333"/><polygon points="19.6,16.8 17.8,11.6 14,16" fill="#333"/></svg>
<svg style="left:55px;top:387.1px" width="16" height="11" viewBox="0 0 16 11"><path d="M1.6 1.8 L8 8.4 L14.4 1.8" fill="none" stroke="#555" stroke-width="2.5"/></svg>
<svg style="left:81.5px;top:382.6px" width="22" height="18" viewBox="0 0 22 18"><path d="M1.2 2.6 Q1.2 1.2 2.6 1.2 L7.2 1.2 L9.2 3.6 L18.6 3.6 Q20 3.6 20 5 L20 15 Q20 16.4 18.6 16.4 L2.6 16.4 Q1.2 16.4 1.2 15 Z" fill="#fff" stroke="#555" stroke-width="1.4"/></svg>
<div class="t" style="left:107.20px;top:385.06px;font-size:16px;line-height:16px;height:16px;color:#333;">Frame (4)</div>
<svg style="left:106px;top:414.1px" width="20" height="20" viewBox="0 0 20 20"><g opacity="1" stroke="#555" stroke-width="1.4" stroke-linejoin="round" fill="#fff">
<path d="M9.4 1.2 L15.4 0.8 L18.6 4.4 L18.6 18.6 L4.4 18.6 L0.8 15.4 L0.8 11 L9.4 9.6 Z"/>
<path d="M12.8 4.6 L18.6 4.4 L18.6 18.6 L4.4 18.6 L4.4 13.8 L12.8 13.4 Z" fill="#fff"/>
<path d="M9.4 1.2 L12.8 4.6 M0.8 11 L4.4 13.8 M9.4 9.6 L12.8 13.2" fill="none" stroke-width="1.1199999999999999"/></g></svg>
<div class="t" style="left:130.60px;top:417.56px;font-size:16px;line-height:16px;height:16px;color:#333;letter-spacing:0.32px;">Bottom Plate &lt;1&gt;</div>
<svg style="left:106px;top:446.6px" width="20" height="20" viewBox="0 0 20 20"><g opacity="1" stroke="#555" stroke-width="1.4" stroke-linejoin="round" fill="#fff">
<path d="M9.4 1.2 L15.4 0.8 L18.6 4.4 L18.6 18.6 L4.4 18.6 L0.8 15.4 L0.8 11 L9.4 9.6 Z"/>
<path d="M12.8 4.6 L18.6 4.4 L18.6 18.6 L4.4 18.6 L4.4 13.8 L12.8 13.4 Z" fill="#fff"/>
<path d="M9.4 1.2 L12.8 4.6 M0.8 11 L4.4 13.8 M9.4 9.6 L12.8 13.2" fill="none" stroke-width="1.1199999999999999"/></g></svg>
<div class="t" style="left:130.60px;top:450.06px;font-size:16px;line-height:16px;height:16px;color:#333;letter-spacing:0.28px;">Top Plate &lt;1&gt;</div>
<svg style="left:81.5px;top:481.1px" width="11" height="16" viewBox="0 0 11 16"><path d="M1.6 1.6 L8.6 8 L1.6 14.4" fill="none" stroke="#555" stroke-width="2.5"/></svg>
<svg style="left:106px;top:479.1px" width="20" height="20" viewBox="0 0 20 20"><g opacity="1" stroke="#555" stroke-width="1.4" stroke-linejoin="round" fill="#fff">
<path d="M9.4 1.2 L15.4 0.8 L18.6 4.4 L18.6 18.6 L4.4 18.6 L0.8 15.4 L0.8 11 L9.4 9.6 Z"/>
<path d="M12.8 4.6 L18.6 4.4 L18.6 18.6 L4.4 18.6 L4.4 13.8 L12.8 13.4 Z" fill="#fff"/>
<path d="M9.4 1.2 L12.8 4.6 M0.8 11 L4.4 13.8 M9.4 9.6 L12.8 13.2" fill="none" stroke-width="1.1199999999999999"/></g></svg>
<div class="t" style="left:130.60px;top:482.56px;font-size:16px;line-height:16px;height:16px;color:#333;letter-spacing:0.12px;">Tube 1"x1"x5" &lt;...</div>
<svg style="left:106px;top:511.6px" width="20" height="20" viewBox="0 0 20 20"><g opacity="1" stroke="#555" stroke-width="1.4" stroke-linejoin="round" fill="#fff">
<path d="M9.4 1.2 L15.4 0.8 L18.6 4.4 L18.6 18.6 L4.4 18.6 L0.8 15.4 L0.8 11 L9.4 9.6 Z"/>
<path d="M12.8 4.6 L18.6 4.4 L18.6 18.6 L4.4 18.6 L4.4 13.8 L12.8 13.4 Z" fill="#fff"/>
<path d="M9.4 1.2 L12.8 4.6 M0.8 11 L4.4 13.8 M9.4 9.6 L12.8 13.2" fill="none" stroke-width="1.1199999999999999"/></g></svg>
<div class="t" style="left:130.60px;top:515.06px;font-size:16px;line-height:16px;height:16px;color:#333;letter-spacing:0.2px;">Motor Spacer Bl...</div>
<svg style="left:55px;top:549.6px" width="16" height="11" viewBox="0 0 16 11"><path d="M1.6 1.8 L8 8.4 L14.4 1.8" fill="none" stroke="#555" stroke-width="2.5"/></svg>
<svg style="left:81.5px;top:545.1px" width="22" height="18" viewBox="0 0 22 18"><path d="M1.2 2.6 Q1.2 1.2 2.6 1.2 L7.2 1.2 L9.2 3.6 L18.6 3.6 Q20 3.6 20 5 L20 15 Q20 16.4 18.6 16.4 L2.6 16.4 Q1.2 16.4 1.2 15 Z" fill="#fff" stroke="#555" stroke-width="1.4"/></svg>
<div class="t" style="left:107.20px;top:547.56px;font-size:16px;line-height:16px;height:16px;color:#333;letter-spacing:0.1px;">New folder (8)</div>
<svg style="left:106px;top:576.6px" width="20" height="20" viewBox="0 0 20 20"><g opacity="1" stroke="#555" stroke-width="1.4" stroke-linejoin="round" fill="#fff">
<path d="M9.4 1.2 L15.4 0.8 L18.6 4.4 L18.6 18.6 L4.4 18.6 L0.8 15.4 L0.8 11 L9.4 9.6 Z"/>
<path d="M12.8 4.6 L18.6 4.4 L18.6 18.6 L4.4 18.6 L4.4 13.8 L12.8 13.4 Z" fill="#fff"/>
<path d="M9.4 1.2 L12.8 4.6 M0.8 11 L4.4 13.8 M9.4 9.6 L12.8 13.2" fill="none" stroke-width="1.1199999999999999"/></g></svg>
<div class="t" style="left:130.60px;top:580.06px;font-size:16px;line-height:16px;height:16px;color:#333;letter-spacing:0.38px;">Bottom Plate &lt;2&gt;</div>
<svg style="left:106px;top:609.1px" width="20" height="20" viewBox="0 0 20 20"><g opacity="1" stroke="#555" stroke-width="1.4" stroke-linejoin="round" fill="#fff">
<path d="M9.4 1.2 L15.4 0.8 L18.6 4.4 L18.6 18.6 L4.4 18.6 L0.8 15.4 L0.8 11 L9.4 9.6 Z"/>
<path d="M12.8 4.6 L18.6 4.4 L18.6 18.6 L4.4 18.6 L4.4 13.8 L12.8 13.4 Z" fill="#fff"/>
<path d="M9.4 1.2 L12.8 4.6 M0.8 11 L4.4 13.8 M9.4 9.6 L12.8 13.2" fill="none" stroke-width="1.1199999999999999"/></g></svg>
<div class="t" style="left:130.60px;top:612.56px;font-size:16px;line-height:16px;height:16px;color:#333;letter-spacing:0.3px;">Top Plate &lt;2&gt;</div>
<svg style="left:106px;top:643.1px" width="20" height="20" viewBox="0 0 20 20"><g opacity="1" stroke="#555" stroke-width="1.4" stroke-linejoin="round" fill="#fff">
<path d="M9.4 1.2 L15.4 0.8 L18.6 4.4 L18.6 18.6 L4.4 18.6 L0.8 15.4 L0.8 11 L9.4 9.6 Z"/>
<path d="M12.8 4.6 L18.6 4.4 L18.6 18.6 L4.4 18.6 L4.4 13.8 L12.8 13.4 Z" fill="#fff"/>
<path d="M9.4 1.2 L12.8 4.6 M0.8 11 L4.4 13.8 M9.4 9.6 L12.8 13.2" fill="none" stroke-width="1.1199999999999999"/></g></svg>
<svg style="left:105.4px;top:641.2px" width="10" height="9" viewBox="0 0 10 9"><rect x="0" y="0" width="9.6" height="8.4" fill="#3d6fd0"/><path d="M0 2.8 L9.6 2.8 M0 5.6 L9.6 5.6 M3.2 0 L3.2 8.4 M6.4 0 L6.4 8.4" stroke="#cfe0ff" stroke-width=".8"/></svg>
<div class="t" style="left:130.60px;top:645.06px;font-size:16px;line-height:16px;height:16px;color:#333;letter-spacing:-0.45px;">1" ...</div>
<svg style="left:174.7px;top:639.6px" width="10" height="24" viewBox="0 0 10 24"><path d="M5 0.6 L5 23.4" stroke="#333" stroke-width="2" stroke-dasharray="2.6 1.8"/><circle cx="5" cy="12" r="3.7" fill="#333"/></svg>
<svg style="left:106px;top:675.6px" width="20" height="20" viewBox="0 0 20 20"><g opacity="1" stroke="#555" stroke-width="1.4" stroke-linejoin="round" fill="#fff">
<path d="M9.4 1.2 L15.4 0.8 L18.6 4.4 L18.6 18.6 L4.4 18.6 L0.8 15.4 L0.8 11 L9.4 9.6 Z"/>
<path d="M12.8 4.6 L18.6 4.4 L18.6 18.6 L4.4 18.6 L4.4 13.8 L12.8 13.4 Z" fill="#fff"/>
<path d="M9.4 1.2 L12.8 4.6 M0.8 11 L4.4 13.8 M9.4 9.6 L12.8 13.2" fill="none" stroke-width="1.1199999999999999"/></g></svg>
<svg style="left:105.4px;top:673.7px" width="10" height="9" viewBox="0 0 10 9"><rect x="0" y="0" width="9.6" height="8.4" fill="#3d6fd0"/><path d="M0 2.8 L9.6 2.8 M0 5.6 L9.6 5.6 M3.2 0 L3.2 8.4 M6.4 0 L6.4 8.4" stroke="#cfe0ff" stroke-width=".8"/></svg>
<div class="t" style="left:130.60px;top:677.56px;font-size:16px;line-height:16px;height:16px;color:#333;letter-spacing:-0.45px;">1" ...</div>
<svg style="left:174.7px;top:672.1px" width="10" height="24" viewBox="0 0 10 24"><path d="M5 0.6 L5 23.4" stroke="#333" stroke-width="2" stroke-dasharray="2.6 1.8"/><circle cx="5" cy="12" r="3.7" fill="#333"/></svg>
<svg style="left:106px;top:740.6px" width="20" height="20" viewBox="0 0 20 20"><g opacity="1" stroke="#555" stroke-width="1.4" stroke-linejoin="round" fill="#fff">
<path d="M9.4 1.2 L15.4 0.8 L18.6 4.4 L18.6 18.6 L4.4 18.6 L0.8 15.4 L0.8 11 L9.4 9.6 Z"/>
<path d="M12.8 4.6 L18.6 4.4 L18.6 18.6 L4.4 18.6 L4.4 13.8 L12.8 13.4 Z" fill="#fff"/>
<path d="M9.4 1.2 L12.8 4.6 M0.8 11 L4.4 13.8 M9.4 9.6 L12.8 13.2" fill="none" stroke-width="1.1199999999999999"/></g></svg>
<svg style="left:105.4px;top:738.7px" width="10" height="9" viewBox="0 0 10 9"><rect x="0" y="0" width="9.6" height="8.4" fill="#3d6fd0"/><path d="M0 2.8 L9.6 2.8 M0 5.6 L9.6 5.6 M3.2 0 L3.2 8.4 M6.4 0 L6.4 8.4" stroke="#cfe0ff" stroke-width=".8"/></svg>
<div class="t" style="left:130.60px;top:742.56px;font-size:16px;line-height:16px;height:16px;color:#333;letter-spacing:-0.45px;">1" ...</div>
<svg style="left:174.7px;top:737.1px" width="10" height="24" viewBox="0 0 10 24"><path d="M5 0.6 L5 23.4" stroke="#333" stroke-width="2" stroke-dasharray="2.6 1.8"/><circle cx="5" cy="12" r="3.7" fill="#333"/></svg>
<svg style="left:106px;top:773.1px" width="20" height="20" viewBox="0 0 20 20"><g opacity="1" stroke="#555" stroke-width="1.4" stroke-linejoin="round" fill="#fff">
<path d="M9.4 1.2 L15.4 0.8 L18.6 4.4 L18.6 18.6 L4.4 18.6 L0.8 15.4 L0.8 11 L9.4 9.6 Z"/>
<path d="M12.8 4.6 L18.6 4.4 L18.6 18.6 L4.4 18.6 L4.4 13.8 L12.8 13.4 Z" fill="#fff"/>
<path d="M9.4 1.2 L12.8 4.6 M0.8 11 L4.4 13.8 M9.4 9.6 L12.8 13.2" fill="none" stroke-width="1.1199999999999999"/></g></svg>
<svg style="left:105.4px;top:771.2px" width="10" height="9" viewBox="0 0 10 9"><rect x="0" y="0" width="9.6" height="8.4" fill="#3d6fd0"/><path d="M0 2.8 L9.6 2.8 M0 5.6 L9.6 5.6 M3.2 0 L3.2 8.4 M6.4 0 L6.4 8.4" stroke="#cfe0ff" stroke-width=".8"/></svg>
<div class="t" style="left:130.60px;top:775.06px;font-size:16px;line-height:16px;height:16px;color:#333;letter-spacing:-0.45px;">1" ...</div>
<svg style="left:174.7px;top:769.6px" width="10" height="24" viewBox="0 0 10 24"><path d="M5 0.6 L5 23.4" stroke="#333" stroke-width="2" stroke-dasharray="2.6 1.8"/><circle cx="5" cy="12" r="3.7" fill="#333"/></svg>
<svg style="left:81.5px;top:708.6px" width="11" height="16" viewBox="0 0 11 16"><path d="M1.6 1.6 L8.6 8 L1.6 14.4" fill="none" stroke="#555" stroke-width="2.5"/></svg>
<svg style="left:106px;top:706.6px" width="20" height="20" viewBox="0 0 20 20"><g opacity="1" stroke="#555" stroke-width="1.4" stroke-linejoin="round" fill="#fff">
<path d="M9.4 1.2 L15.4 0.8 L18.6 4.4 L18.6 18.6 L4.4 18.6 L0.8 15.4 L0.8 11 L9.4 9.6 Z"/>
<path d="M12.8 4.6 L18.6 4.4 L18.6 18.6 L4.4 18.6 L4.4 13.8 L12.8 13.4 Z" fill="#fff"/>
<path d="M9.4 1.2 L12.8 4.6 M0.8 11 L4.4 13.8 M9.4 9.6 L12.8 13.2" fill="none" stroke-width="1.1199999999999999"/></g></svg>
<div class="t" style="left:130.60px;top:710.06px;font-size:16px;line-height:16px;height:16px;color:#333;letter-spacing:0.12px;">Tube 1"x1"x5" &lt;...</div>
<svg style="left:106px;top:804.1px" width="20" height="20" viewBox="0 0 20 20"><g opacity="1" stroke="#555" stroke-width="1.4" stroke-linejoin="round" fill="#fff">
<path d="M9.4 1.2 L15.4 0.8 L18.6 4.4 L18.6 18.6 L4.4 18.6 L0.8 15.4 L0.8 11 L9.4 9.6 Z"/>
<path d="M12.8 4.6 L18.6 4.4 L18.6 18.6 L4.4 18.6 L4.4 13.8 L12.8 13.4 Z" fill="#fff"/>
<path d="M9.4 1.2 L12.8 4.6 M0.8 11 L4.4 13.8 M9.4 9.6 L12.8 13.2" fill="none" stroke-width="1.1199999999999999"/></g></svg>
<div class="t" style="left:130.60px;top:807.56px;font-size:16px;line-height:16px;height:16px;color:#333;letter-spacing:0.2px;">Motor Spacer Bl...</div>
<svg style="left:55px;top:842.1px" width="16" height="11" viewBox="0 0 16 11"><path d="M1.6 1.8 L8 8.4 L14.4 1.8" fill="none" stroke="#555" stroke-width="2.5"/></svg>
<div class="t" style="left:79.00px;top:840.06px;font-size:16px;line-height:16px;height:16px;color:#333;letter-spacing:0.05px;">Items (0)</div>
<svg style="left:55px;top:874.6px" width="16" height="11" viewBox="0 0 16 11"><path d="M1.6 1.8 L8 8.4 L14.4 1.8" fill="none" stroke="#555" stroke-width="2.5"/></svg>
<div class="t" style="left:79.00px;top:872.56px;font-size:16px;line-height:16px;height:16px;color:#333;letter-spacing:0.05px;">Loads (0)</div>
<svg style="left:55px;top:907.1px" width="16" height="11" viewBox="0 0 16 11"><path d="M1.6 1.8 L8 8.4 L14.4 1.8" fill="none" stroke="#555" stroke-width="2.5"/></svg>
<div class="t" style="left:79.00px;top:905.06px;font-size:16px;line-height:16px;height:16px;color:#333;letter-spacing:0.05px;">Mate Features (10)</div>
<svg style="left:105.5px;top:934.1px" width="20" height="20" viewBox="0 0 20 20"><g opacity=".45"><rect x="2.4" y="2.4" width="15.2" height="15.2" fill="none" stroke="#333" stroke-width="1.2" stroke-dasharray="2.4 1.8"/>
<g fill="#fff" stroke="#333" stroke-width="1"><rect x="1" y="1" width="2.6" height="2.6"/><rect x="16.4" y="1" width="2.6" height="2.6"/><rect x="1" y="16.4" width="2.6" height="2.6"/><rect x="16.4" y="16.4" width="2.6" height="2.6"/>
<rect x="9" y="9" width="6" height="6"/><rect x="5.6" y="5.6" width="6" height="6"/></g></g></svg>
<div class="t" style="left:130.60px;top:937.56px;font-size:16px;line-height:16px;height:16px;color:#9a9a9a;letter-spacing:-0.3px;">Group 1</div>
<svg style="left:81.5px;top:968.6px" width="11" height="16" viewBox="0 0 11 16"><path d="M1.6 1.6 L8.6 8 L1.6 14.4" fill="none" stroke="#555" stroke-width="2.5"/></svg>
<svg style="left:106.5px;top:966.6px" width="18" height="20" viewBox="0 0 18 20"><g opacity=".42"><path d="M1.8 5 L1.8 15.4 A7.2 3 0 0 0 16.2 15.4 L16.2 5" fill="#fff" stroke="#555" stroke-width="1.3"/><ellipse cx="9" cy="5" rx="7.2" ry="3" fill="#fff" stroke="#555" stroke-width="1.3"/>
<path d="M1.8 10.6 L1.8 15.4 A7.2 3 0 0 0 16.2 15.4 L16.2 10.6 A7.2 3 0 0 1 12 13.2 L12 15.6 Q9 16.6 6 15.6 L6 13.2 A7.2 3 0 0 1 1.8 10.6 Z" fill="#8a8a8a" stroke="#555" stroke-width="1"/></g></svg>
<div class="t" style="left:130.60px;top:970.06px;font-size:16px;line-height:16px;height:16px;color:#9a9a9a;letter-spacing:-0.05px;">Fastened 1</div>
<svg style="left:81.5px;top:1001.1px" width="11" height="16" viewBox="0 0 11 16"><path d="M1.6 1.6 L8.6 8 L1.6 14.4" fill="none" stroke="#555" stroke-width="2.5"/></svg>
<svg style="left:106.5px;top:999.1px" width="18" height="20" viewBox="0 0 18 20"><g opacity=".42"><path d="M1.8 5 L1.8 15.4 A7.2 3 0 0 0 16.2 15.4 L16.2 5" fill="#fff" stroke="#555" stroke-width="1.3"/><ellipse cx="9" cy="5" rx="7.2" ry="3" fill="#fff" stroke="#555" stroke-width="1.3"/>
<path d="M1.8 10.6 L1.8 15.4 A7.2 3 0 0 0 16.2 15.4 L16.2 10.6 A7.2 3 0 0 1 12 13.2 L12 15.6 Q9 16.6 6 15.6 L6 13.2 A7.2 3 0 0 1 1.8 10.6 Z" fill="#8a8a8a" stroke="#555" stroke-width="1"/></g></svg>
<div class="t" style="left:130.60px;top:1002.56px;font-size:16px;line-height:16px;height:16px;color:#9a9a9a;letter-spacing:-0.05px;">Fastened 2</div>
<svg style="left:81.5px;top:1033.6px" width="11" height="16" viewBox="0 0 11 16"><path d="M1.6 1.6 L8.6 8 L1.6 14.4" fill="none" stroke="#555" stroke-width="2.5"/></svg>
<svg style="left:106.5px;top:1031.6px" width="18" height="20" viewBox="0 0 18 20"><g opacity=".5" fill="none" stroke="#555" stroke-width="1.2"><path d="M9 18.8 C5 12.6 3 10 3 7 A6 6 0 0 1 15 7 C15 10 13 12.6 9 18.8 Z" fill="#fff"/><circle cx="9" cy="7" r="2.8"/><circle cx="9" cy="7" r="1" fill="#555"/></g></svg>
<div class="t" style="left:130.60px;top:1035.06px;font-size:16px;line-height:16px;height:16px;color:#9a9a9a;letter-spacing:-0.05px;">Fastened 11</div>
<svg style="left:81.5px;top:1066.1px" width="11" height="16" viewBox="0 0 11 16"><path d="M1.6 1.6 L8.6 8 L1.6 14.4" fill="none" stroke="#555" stroke-width="2.5"/></svg>
<svg style="left:106.5px;top:1064.1px" width="18" height="20" viewBox="0 0 18 20"><g opacity=".42"><path d="M1.8 5 L1.8 15.4 A7.2 3 0 0 0 16.2 15.4 L16.2 5" fill="#fff" stroke="#555" stroke-width="1.3"/><ellipse cx="9" cy="5" rx="7.2" ry="3" fill="#fff" stroke="#555" stroke-width="1.3"/>
<path d="M1.8 10.6 L1.8 15.4 A7.2 3 0 0 0 16.2 15.4 L16.2 10.6 A7.2 3 0 0 1 12 13.2 L12 15.6 Q9 16.6 6 15.6 L6 13.2 A7.2 3 0 0 1 1.8 10.6 Z" fill="#8a8a8a" stroke="#555" stroke-width="1"/></g></svg>
<div class="t" style="left:130.60px;top:1067.56px;font-size:16px;line-height:16px;height:16px;color:#9a9a9a;letter-spacing:-0.05px;">Fastened 7</div>
<svg style="left:81.5px;top:1098.6px" width="11" height="16" viewBox="0 0 11 16"><path d="M1.6 1.6 L8.6 8 L1.6 14.4" fill="none" stroke="#555" stroke-width="2.5"/></svg>
<svg style="left:106.5px;top:1096.6px" width="18" height="20" viewBox="0 0 18 20"><g opacity=".42"><path d="M1.8 5 L1.8 15.4 A7.2 3 0 0 0 16.2 15.4 L16.2 5" fill="#fff" stroke="#555" stroke-width="1.3"/><ellipse cx="9" cy="5" rx="7.2" ry="3" fill="#fff" stroke="#555" stroke-width="1.3"/>
<path d="M1.8 10.6 L1.8 15.4 A7.2 3 0 0 0 16.2 15.4 L16.2 10.6 A7.2 3 0 0 1 12 13.2 L12 15.6 Q9 16.6 6 15.6 L6 13.2 A7.2 3 0 0 1 1.8 10.6 Z" fill="#8a8a8a" stroke="#555" stroke-width="1"/></g></svg>
<div class="t" style="left:130.60px;top:1100.06px;font-size:16px;line-height:16px;height:16px;color:#9a9a9a;letter-spacing:-0.05px;">Fastened 12</div>
<svg style="left:81.5px;top:1131.1px" width="11" height="16" viewBox="0 0 11 16"><path d="M1.6 1.6 L8.6 8 L1.6 14.4" fill="none" stroke="#555" stroke-width="2.5"/></svg>
<svg style="left:106.5px;top:1129.1px" width="18" height="20" viewBox="0 0 18 20"><g opacity=".42"><path d="M1.8 5 L1.8 15.4 A7.2 3 0 0 0 16.2 15.4 L16.2 5" fill="#fff" stroke="#555" stroke-width="1.3"/><ellipse cx="9" cy="5" rx="7.2" ry="3" fill="#fff" stroke="#555" stroke-width="1.3"/>
<path d="M1.8 10.6 L1.8 15.4 A7.2 3 0 0 0 16.2 15.4 L16.2 10.6 A7.2 3 0 0 1 12 13.2 L12 15.6 Q9 16.6 6 15.6 L6 13.2 A7.2 3 0 0 1 1.8 10.6 Z" fill="#8a8a8a" stroke="#555" stroke-width="1"/></g></svg>
<div class="t" style="left:130.60px;top:1132.56px;font-size:16px;line-height:16px;height:16px;color:#9a9a9a;letter-spacing:-0.05px;">Fastened 13</div>
<svg style="left:81.5px;top:1163.6px" width="11" height="16" viewBox="0 0 11 16"><path d="M1.6 1.6 L8.6 8 L1.6 14.4" fill="none" stroke="#555" stroke-width="2.5"/></svg>
<svg style="left:106.5px;top:1161.6px" width="18" height="20" viewBox="0 0 18 20"><g opacity=".42"><path d="M1.8 5 L1.8 15.4 A7.2 3 0 0 0 16.2 15.4 L16.2 5" fill="#fff" stroke="#555" stroke-width="1.3"/><ellipse cx="9" cy="5" rx="7.2" ry="3" fill="#fff" stroke="#555" stroke-width="1.3"/>
<path d="M1.8 10.6 L1.8 15.4 A7.2 3 0 0 0 16.2 15.4 L16.2 10.6 A7.2 3 0 0 1 12 13.2 L12 15.6 Q9 16.6 6 15.6 L6 13.2 A7.2 3 0 0 1 1.8 10.6 Z" fill="#8a8a8a" stroke="#555" stroke-width="1"/></g></svg>
<div class="t" style="left:130.60px;top:1165.06px;font-size:16px;line-height:16px;height:16px;color:#9a9a9a;letter-spacing:-0.05px;">Fastened 14</div>
<svg style="left:81.5px;top:1196.1px" width="11" height="16" viewBox="0 0 11 16"><path d="M1.6 1.6 L8.6 8 L1.6 14.4" fill="none" stroke="#555" stroke-width="2.5"/></svg>
<svg style="left:106.5px;top:1194.1px" width="18" height="20" viewBox="0 0 18 20"><g opacity=".42"><path d="M1.8 5 L1.8 15.4 A7.2 3 0 0 0 16.2 15.4 L16.2 5" fill="#fff" stroke="#555" stroke-width="1.3"/><ellipse cx="9" cy="5" rx="7.2" ry="3" fill="#fff" stroke="#555" stroke-width="1.3"/>
<path d="M1.8 10.6 L1.8 15.4 A7.2 3 0 0 0 16.2 15.4 L16.2 10.6 A7.2 3 0 0 1 12 13.2 L12 15.6 Q9 16.6 6 15.6 L6 13.2 A7.2 3 0 0 1 1.8 10.6 Z" fill="#8a8a8a" stroke="#555" stroke-width="1"/></g></svg>
<div class="t" style="left:130.60px;top:1197.56px;font-size:16px;line-height:16px;height:16px;color:#9a9a9a;letter-spacing:-0.05px;">Fastened 15</div>
<svg style="left:81.5px;top:1228.6px" width="11" height="16" viewBox="0 0 11 16"><path d="M1.6 1.6 L8.6 8 L1.6 14.4" fill="none" stroke="#555" stroke-width="2.5"/></svg>
<svg style="left:106.5px;top:1226.6px" width="18" height="20" viewBox="0 0 18 20"><g opacity=".42"><path d="M1.8 5 L1.8 15.4 A7.2 3 0 0 0 16.2 15.4 L16.2 5" fill="#fff" stroke="#555" stroke-width="1.3"/><ellipse cx="9" cy="5" rx="7.2" ry="3" fill="#fff" stroke="#555" stroke-width="1.3"/>
<path d="M1.8 10.6 L1.8 15.4 A7.2 3 0 0 0 16.2 15.4 L16.2 10.6 A7.2 3 0 0 1 12 13.2 L12 15.6 Q9 16.6 6 15.6 L6 13.2 A7.2 3 0 0 1 1.8 10.6 Z" fill="#8a8a8a" stroke="#555" stroke-width="1"/></g></svg>
<div class="t" style="left:130.60px;top:1230.06px;font-size:16px;line-height:16px;height:16px;color:#9a9a9a;letter-spacing:-0.05px;">Fastened 22</div>
<div class="abs" style="left:306px;top:643.8px;width:42px;height:42.7px;background:#fff;border:1px solid #8a8a8a;border-left:none"></div><svg style="left:314px;top:655px" width="26" height="25" viewBox="0 0 26 25"><path d="M1.6 1.8 L5.2 5.4 L8.8 1.8" fill="none" stroke="#222" stroke-width="1.6"/><path d="M5.2 7.6 L5.2 23" stroke="#666" stroke-width="1.7"/>
<path d="M11.6 2.6 L24 2.6" stroke="#666" stroke-width="1.6"/><path d="M8 8.8 L24 8.8 M8 15 L24 15" stroke="#222" stroke-width="1.5"/><path d="M8 21.4 L24 21.4" stroke="#555" stroke-width="1.8"/></svg>
<svg style="left:60px;top:1265px" width="22" height="21" viewBox="0 0 22 21"><path d="M10.8 1 L10.8 19.6 M1.4 10.4 L20.2 10.4" stroke="#666" stroke-width="3.6"/></svg>
<svg style="left:92.5px;top:1258px" width="60" height="33" viewBox="0 0 60 33"><path d="M0 0 L42.5 0 L52.5 16 L42.5 32 L0 32 Z" fill="#ebebeb"/></svg>
<svg style="left:103px;top:1260px" width="25" height="24" viewBox="0 0 25 24"><path d="M12.4 0.8 L18 6 L18 2.4 L21.2 2.4 L21.2 9 L24 11.6 L21.6 11.6 L21.6 22.6 L15.2 22.6 L15.2 14.4 L9.8 14.4 L9.8 22.6 L3.2 22.6 L3.2 11.6 L0.8 11.6 Z" fill="#666"/></svg>
<svg style="left:135px;top:1258px" width="180" height="33" viewBox="0 0 180 33"><path d="M0 0 L159.5 0 L170 16 L159.5 32 L0 32 L10 16 Z" fill="#fff"/><path d="M0 0 L10 16 L0 32" fill="none" stroke="#dcdcdc" stroke-width="1"/></svg>
<div class="t" style="left:162.60px;top:1264.33px;font-size:16.5px;line-height:16.5px;height:16.5px;color:#555;letter-spacing:0.1px;">Exercise 7 - Ver</div>
<div class="abs" style="left:309px;top:1257px;width:250px;height:33px;background:#ebebeb;border-radius:0 0 7px 7px;box-shadow:0 1px 2px rgba(0,0,0,.28)"></div><div class="abs" style="left:561px;top:1257px;width:249.5px;height:33px;background:#fff;border-radius:0 0 7px 7px;box-shadow:0 1px 2px rgba(0,0,0,.28)"></div><div class="abs" style="left:561px;top:1286px;width:249.5px;height:6px;border-radius:0 0 7px 7px;background:#1a50b4"></div><div class="abs" style="left:561px;top:1284px;width:249.5px;height:5px;background:#fff"></div><div class="abs" style="left:813.5px;top:1257px;width:250px;height:33px;background:#ebebeb;border-radius:0 0 7px 7px;box-shadow:0 1px 2px rgba(0,0,0,.28)"></div><div class="abs" style="left:1066px;top:1257px;width:249.5px;height:33px;background:#ebebeb;border-radius:0 0 7px 7px;box-shadow:0 1px 2px rgba(0,0,0,.28)"></div><svg style="left:322px;top:1260.95px" width="23.1" height="23.1" viewBox="0 0 22 22"><g stroke="#444" stroke-width="1.4" stroke-linejoin="round">
<path d="M1 3 L5 0.8 L17 0.8 Q20.6 0.8 20.6 4.4 L20.6 20.6 L6 20.6 L1 16.6 Z" fill="#fff"/>
<path d="M1 3 L6 6.4 L6 20.6 M6 6.4 L20.4 6.4" fill="none"/>
<path d="M1 3 L5 0.8 L14 0.8 L14 12 L10 14.6 L1 14.6 Z" fill="#8e8e8e"/><path d="M4.6 4 L14 4 M4.6 4 L4.6 14.4 M1 3 L4.6 4 M14 0.8 L14 4" fill="none" stroke-width="1" stroke="#555"/></g></svg>
<div class="t" style="left:350.00px;top:1266.21px;font-size:17px;line-height:17px;height:17px;color:#555;letter-spacing:0.18px;">Exercise 7 Assembly</div>
<svg style="left:575px;top:1260.95px" width="23.1" height="23.1" viewBox="0 0 22 22"><g stroke="#444" stroke-width="1.4" stroke-linejoin="round">
<path d="M1 3 L5 0.8 L17 0.8 Q20.6 0.8 20.6 4.4 L20.6 20.6 L6 20.6 L1 16.6 Z" fill="#fff"/>
<path d="M1 3 L6 6.4 L6 20.6 M6 6.4 L20.4 6.4" fill="none"/>
<path d="M1 3 L5 0.8 L14 0.8 L14 12 L10 14.6 L1 14.6 Z" fill="#8e8e8e"/><path d="M4.6 4 L14 4 M4.6 4 L4.6 14.4 M1 3 L4.6 4 M14 0.8 L14 4" fill="none" stroke-width="1" stroke="#555"/></g></svg>
<div class="t" style="left:603.00px;top:1266.21px;font-size:17px;line-height:17px;height:17px;color:#333;">Exercise 7 Assembly C...</div>
<svg style="left:827px;top:1260.95px" width="23.1" height="23.1" viewBox="0 0 22 22"><g stroke="#444" stroke-width="1.4" stroke-linejoin="round">
<path d="M1 3 L5 0.8 L17 0.8 Q20.6 0.8 20.6 4.4 L20.6 20.6 L6 20.6 L1 16.6 Z" fill="#fff"/>
<path d="M1 3 L6 6.4 L6 20.6 M6 6.4 L20.4 6.4" fill="none"/>
<path d="M1 3 L5 0.8 L14 0.8 L14 12 L10 14.6 L1 14.6 Z" fill="#8e8e8e"/><path d="M4.6 4 L14 4 M4.6 4 L4.6 14.4 M1 3 L4.6 4 M14 0.8 L14 4" fill="none" stroke-width="1" stroke="#555"/></g></svg>
<div class="t" style="left:855.40px;top:1266.21px;font-size:17px;line-height:17px;height:17px;color:#555;letter-spacing:0.13px;">Assembly 1</div>
<svg style="left:1080px;top:1260px" width="24" height="25" viewBox="0 0 24 25"><g fill="#fff" stroke="#444" stroke-width="1.5" stroke-linejoin="round">
<path d="M12 3.2 L14.6 1 L19.4 1 L22.4 4 L22.4 23 L14.6 23 L12 20.8 Z"/><path d="M12 3.2 L14.8 5.4 L22.2 4.4 M14.8 5.4 L14.8 23" fill="none"/>
<path d="M1.4 9 L4 6.8 L8.6 6.8 L11.2 9.6 L11.2 23 L4.2 23 L1.4 20.6 Z"/><path d="M1.4 9 L4.2 11.2 L11.2 10 M4.2 11.2 L4.2 23" fill="none"/></g></svg>
<div class="t" style="left:1108.00px;top:1266.21px;font-size:17px;line-height:17px;height:17px;color:#555;letter-spacing:0.04px;">Exercise 7 Part Studio</div>
<div class="abs" style="left:2358px;top:473px;width:40px;height:248.0px;background:#fff;border:1px solid #9a9a9a;border-right:none"></div><div class="abs" style="left:2358px;top:514.2px;width:40px;height:1px;background:#9a9a9a"></div><div class="abs" style="left:2358px;top:555.3px;width:40px;height:1px;background:#9a9a9a"></div><div class="abs" style="left:2358px;top:596.5px;width:40px;height:1px;background:#9a9a9a"></div><div class="abs" style="left:2358px;top:637.7px;width:40px;height:1px;background:#9a9a9a"></div><div class="abs" style="left:2358px;top:678.9px;width:40px;height:1px;background:#9a9a9a"></div><div class="abs" style="left:2358px;top:734px;width:40px;height:124.5px;background:#fff;border:1px solid #9a9a9a;border-right:none"></div><div class="abs" style="left:2358px;top:775.2px;width:40px;height:1px;background:#9a9a9a"></div><div class="abs" style="left:2358px;top:816.3px;width:40px;height:1px;background:#9a9a9a"></div>
<svg style="left:2366px;top:483px" width="25" height="25" viewBox="0 0 25 25"><rect x="1.2" y="1.2" width="22.6" height="22.6" rx="3.4" fill="#fff" stroke="#333" stroke-width="1.5"/>
<path d="M5 6.8 L17.6 6.8" stroke="#333" stroke-width="2.4"/><path d="M9.6 11.4 L20.4 11.4 M9.6 15.6 L20.4 15.6 M9.6 19.6 L20.4 19.6" stroke="#222" stroke-width="2.4"/><path d="M6.4 8 L6.4 19" stroke="#555" stroke-width="1.2"/></svg>
<svg style="left:2365px;top:523px" width="27" height="27" viewBox="0 0 27 27"><g fill="#fff" stroke="#222" stroke-width="1.5" stroke-linejoin="round"><path d="M6 9.6 L15 5 L24.4 9.6 L24.4 20 L15 24.6 L6 20 Z"/><path d="M6 9.6 L15 14 L24.4 9.6 M15 14 L15 24.6" fill="none"/></g>
<rect x="1" y="1.2" width="12.8" height="9.8" fill="#1a50b4"/><g fill="#8ec8f2"><rect x="2.4" y="2.6" width="2.6" height="2.2"/><rect x="6.2" y="2.6" width="2.6" height="2.2"/><rect x="10" y="2.6" width="2.6" height="2.2"/><rect x="2.4" y="6" width="2.6" height="1.8" fill="#dfeaff"/><rect x="6.2" y="6" width="2.6" height="1.8" fill="#dfeaff"/><rect x="10" y="6" width="2.6" height="1.8" fill="#dfeaff"/><rect x="2.4" y="8.6" width="2.6" height="1.4" fill="#7aa0e6"/><rect x="6.2" y="8.6" width="2.6" height="1.4" fill="#7aa0e6"/><rect x="10" y="8.6" width="2.6" height="1.4" fill="#7aa0e6"/></g></svg>
<svg style="left:2365px;top:564px" width="27" height="27" viewBox="0 0 27 27"><g stroke="#555" stroke-width="1" fill="#ddd"><path d="M2.2 3.6 L4.2 1.8 L9.4 1.8 L9.4 7.6 L7.4 9.4 L2.2 9.4 Z"/><path d="M2.2 3.6 L7.4 3.6 L9.4 1.8 M7.4 3.6 L7.4 9.4" fill="none"/></g>
<path d="M6 11 L14 13.2" stroke="#1a50b4" stroke-width="1.6" stroke-dasharray="1.6 1"/>
<g fill="#fff" stroke="#333" stroke-width="1.3" stroke-linejoin="round"><path d="M16.6 10.2 L21.6 9.8 L24.6 12.6 L24.6 24.4 L13 24.4 L10 21.6 L10 18 L16.6 17 Z"/><path d="M19.6 13 L24.6 12.6 M19.6 13 L19.6 20.6 L13 20.8 L13 24.4 M16.6 10.2 L19.6 13 M10 18 L13 20.8 M16.6 17 L19.6 20.4" fill="none" stroke-width="1"/></g></svg>
<svg style="left:2365px;top:606px" width="27" height="27" viewBox="0 0 27 27"><rect x="2.4" y="15.2" width="20" height="8.6" fill="#fff" stroke="#333" stroke-width="1.5"/>
<path d="M15.2 22 L15.2 2.6 L24 2.6 L24 20" fill="none" stroke="#1a50b4" stroke-width="1.5" stroke-dasharray="2.6 1.8"/>
<path d="M15.2 19.6 A4.4 4.4 0 0 0 24 19.6" fill="none" stroke="#1a50b4" stroke-width="1.5"/><circle cx="19.6" cy="19.6" r="2.3" fill="#fff" stroke="#333" stroke-width="1.2"/></svg>
<svg style="left:2366px;top:648px" width="25" height="25" viewBox="0 0 25 25"><g stroke="#fff" stroke-width="1"><polygon points="12.2,12.6 12.2,0.8 5.4,5.2" fill="#8fd0f2"/><polygon points="12.2,12.6 12.2,0.8 19,5.2" fill="#8fd0f2"/>
<polygon points="12.2,12.6 5.4,5.2 2,16.4" fill="#1a50b4"/><polygon points="12.2,12.6 2,16.4 12.2,24" fill="#1a50b4"/>
<polygon points="12.2,12.6 19,5.2 22.4,16.4" fill="#9a9a9a"/><polygon points="12.2,12.6 22.4,16.4 12.2,24" fill="#8a8a8a"/></g></svg>
<svg style="left:2364px;top:688px" width="28" height="25" viewBox="0 0 28 25"><rect x="3.4" y="1.4" width="11.6" height="9" fill="#333"/><path d="M3.4 4.4 L15 4.4 M3.4 7.4 L15 7.4 M7.2 1.4 L7.2 10.4 M11.2 1.4 L11.2 10.4" stroke="#ccc" stroke-width=".9"/>
<path d="M5.6 3 C2 8 2 17 5.6 22.6" fill="none" stroke="#222" stroke-width="2.2"/><path d="M22.6 3 C26.2 8 26.2 17 22.6 22.6" fill="none" stroke="#222" stroke-width="2.2"/></svg>
<div class="t" style="left:2371.50px;top:688.82px;font-size:21px;line-height:21px;height:21px;color:#1d1d1d;font-weight:bold;font-style:italic;font-family:'Liberation Serif',serif;">x</div>
<svg style="left:2364px;top:740px" width="30" height="30" viewBox="0 0 30 30"><rect x="0.6" y="0.6" width="28.6" height="28.6" rx="4" fill="#e0e0e0"/><rect x="2.6" y="2.6" width="24.6" height="24.6" rx="2" fill="#fff"/>
<g fill="none" stroke-width="5.4"><path d="M9.2 6.4 A10.4 10.4 0 0 1 20.6 6.4" stroke="#7db55a"/><path d="M23.4 9.2 A10.4 10.4 0 0 1 23.4 20.6" stroke="#3fb0ea"/><path d="M20.6 23.4 A10.4 10.4 0 0 1 9.2 23.4" stroke="#ebb040"/><path d="M6.4 20.6 A10.4 10.4 0 0 1 6.4 9.2" stroke="#d84a42"/></g></svg>
<svg style="left:2364px;top:781px" width="30" height="30" viewBox="0 0 30 30"><rect x="0.6" y="0.6" width="28.6" height="28.6" rx="4" fill="#e3e3e3"/><rect x="2.6" y="3.2" width="24.6" height="24" fill="#0a5ce6" stroke="#111" stroke-width="1.4"/></svg>
<div class="t" style="left:2368.40px;top:791.30px;font-size:15px;line-height:15px;height:15px;color:#fff;font-weight:bold;letter-spacing:-0.4px;font-family:'Liberation Serif',serif;transform:scale(.76,1.3);transform-origin:0 100%;">MK</div>
<svg style="left:2364px;top:822px" width="30" height="30" viewBox="0 0 30 30"><rect x="0.6" y="0.6" width="28.6" height="28.6" rx="4" fill="#d9d9d9"/>
<g stroke="#d9d9d9" stroke-width="1"><path d="M14.9 15.2 L6.2 6.4 A12.4 12.4 0 0 1 23.6 6.4 Z" fill="#7bcb4f"/><path d="M14.9 15.2 L23.6 6.4 A12.4 12.4 0 0 1 23.6 24 Z" fill="#3fb2ee"/><path d="M14.9 15.2 L23.6 24 A12.4 12.4 0 0 1 6.2 24 Z" fill="#ecb144"/><path d="M14.9 15.2 L6.2 24 A12.4 12.4 0 0 1 6.2 6.4 Z" fill="#d8463f"/></g></svg>
<svg style="left:2273px;top:1229px" width="25" height="19" viewBox="0 0 25 19"><g fill="#fff" stroke="#222" stroke-width="1.6" stroke-linejoin="round"><path d="M8 6.2 L8 11.2 L2.4 11.2 L2.4 16.6 L17.6 16.6 Q21.8 16.2 21.8 12 L21.8 6.2"/><ellipse cx="14.9" cy="6.2" rx="6.9" ry="4"/><ellipse cx="14.9" cy="6.2" rx="3.4" ry="1.6" fill="#fff" stroke-width="1.3"/></g>
<path d="M5 16 L5 14 M7.6 16 L7.6 13.4 M10.2 16 L10.2 14 M12.8 16 L12.8 13.4 M15.4 16 L15.4 14 M18 15.6 L18 13.4" stroke="#444" stroke-width=".9"/></svg>
<svg style="left:2315px;top:1229px" width="28" height="20" viewBox="0 0 28 20"><path d="M1.6 17.6 A12.4 15.4 0 0 1 26.4 17.6 Z" fill="#fff" stroke="#222" stroke-width="1.7" stroke-linejoin="round"/>
<path d="M6.6 14 A7.6 9 0 0 1 21.4 14 L17 14 L15.4 12 L12.6 12 L11 14 Z" fill="#fff" stroke="#222" stroke-width="1.5" stroke-linejoin="round"/>
<path d="M4 13 L5.4 13.4 M4.8 9.6 L6.2 10.4 M6.6 6.6 L7.8 7.6 M9.4 4.4 L10.2 5.8 M12.4 3.4 L12.8 4.8 M15.6 3.4 L15.2 4.8 M18.6 4.4 L17.8 5.8 M21.4 6.6 L20.2 7.6 M23.2 9.6 L21.8 10.4 M24 13 L22.6 13.4" stroke="#444" stroke-width=".8"/></svg>
<svg style="left:2362px;top:1228px" width="21" height="21" viewBox="0 0 21 21"><path d="M3.4 2.6 L17.6 2.6 M10.5 2.6 L10.5 16.6" stroke="#222" stroke-width="1.5"/><path d="M1.4 18.6 L19.6 18.6" stroke="#222" stroke-width="2"/>
<path d="M4.6 3 L1.6 13.6 L7.4 13.6 Z M16.4 3 L13.6 13.6 L19.4 13.6 Z" fill="#fff" stroke="#222" stroke-width="1.1"/><path d="M1.2 12.4 L7.8 12.4 L7 14.4 L2 14.4 Z M13.2 12.4 L19.8 12.4 L19 14.4 L14 14.4 Z" fill="#222"/></svg>
<svg style="left:2185px;top:110px" width="200" height="200" viewBox="0 0 200 200"><g fill="#dfe7ef">
<polygon points="100.2,5 109,16.8 91.4,16.8"/><polygon points="100.2,191.6 109,180 91.4,180"/>
<polygon points="7.4,98.4 19,89 19,107.6"/><polygon points="194,98.4 182.4,89 182.4,107.6"/>
<path d="M74 15 Q48 22 37 37 L32.5 34.5 L33.4 47 L47.5 43.5 L42.5 41 Q53 28.5 76.5 22 Z"/>
<path d="M126.4 15 Q152.4 22 163.4 37 L167.9 34.5 L167 47 L152.9 43.5 L157.9 41 Q147.4 28.5 123.9 22 Z"/>
<path d="M100.2 45.6 Q104 44.6 108 46 L142 59 Q148.6 62 148.6 69 L148.6 118 Q148.6 124 144 128 L118 148.4 Q113 152 107 150.2 L62 137 Q55.8 134.6 55.8 128 L55.8 74 Q55.8 68 60.4 65 L92 47.6 Q96 45.6 100.2 45.6 Z"/></g>
<g fill="#fff">
<path d="M86 51.5 Q89 49.6 93 50.6 L129 59.4 Q134.6 61 130.6 64.6 L116 78 Q112 81.4 106.6 79.8 L71 69.6 Q64.6 67.6 69.4 64 Z"/>
<path d="M57.7 92 Q57.7 86.6 62.6 88.2 L99.6 98.8 Q104 100.4 104 105 L104 136 Q104 141.4 99.4 140 L62.4 128.4 Q57.7 126.8 57.7 122 Z"/>
<path d="M119.5 108 Q119.5 104 122.4 101.2 L141 83.6 Q144.6 80.6 144.6 85.4 L144.6 114 Q144.6 118.6 141.6 121.4 L123.4 136.4 Q119.5 139.4 119.5 134.6 Z"/>
<ellipse cx="59.6" cy="76.6" rx="4" ry="5.4" transform="rotate(30 59.6 76.6)"/><circle cx="110.8" cy="91" r="7"/><ellipse cx="111.8" cy="145" rx="5.4" ry="2.6" transform="rotate(-12 111.8 145)"/><ellipse cx="141.6" cy="67.6" rx="1.6" ry="4.4" transform="rotate(-35 141.6 67.6)"/>
</g>
<path d="M86.4 78 L86.4 95 M111 99 L120 104" stroke="#fff" stroke-width="1"/>
<path d="M48.4 74.6 L48.4 138.4" stroke="#2f2fe0" stroke-width="1.7"/>
<path d="M48.4 138.4 L112 156" stroke="#e03a3a" stroke-width="1.7"/>
<path d="M48.4 138.4 L62 127" stroke="#2e9a3a" stroke-width="1.6"/><path d="M62 127 L85 107" stroke="#9ad29a" stroke-width="1.1"/></svg>
<div class="t" style="left:2229.00px;top:165.61px;font-size:17px;line-height:17px;height:17px;color:#2f2fe0;font-weight:bold;transform:scaleX(.78);transform-origin:0 0;">Z</div>
<div class="t" style="left:2303.40px;top:261.43px;font-size:16.5px;line-height:16.5px;height:16.5px;color:#e03a3a;font-weight:bold;transform:scaleX(.8);transform-origin:0 0;">X</div>
<div class="t" style="left:2272.60px;top:203.28px;font-size:15.5px;line-height:15.5px;height:15.5px;color:#9ad29a;transform:scaleX(.85);transform-origin:0 0;">Y</div>
<div class="t" style="left:2251.00px;top:213.13px;font-size:14.5px;line-height:14.5px;height:14.5px;color:#444;transform:rotate(16deg) ;transform-origin:0 100%;">Front</div>
<div class="t" style="left:2276.00px;top:162.71px;font-size:10.5px;line-height:10.5px;height:10.5px;color:#555;transform:rotate(20deg) skewX(-28deg);transform-origin:0 100%;">Top</div>
<div class="t" style="left:2311.00px;top:218.87px;font-size:11.5px;line-height:11.5px;height:11.5px;color:#555;font-style:italic;transform:rotate(-40deg) scaleX(.85);transform-origin:0 100%;">Right</div>
<svg style="left:2328px;top:279px" width="25" height="25" viewBox="0 0 25 25"><g stroke="#222" stroke-width="1.3" stroke-linejoin="round"><path d="M2.6 6.6 L12.6 1.6 L23 6.2 L23 18 L12.6 23.6 L2.6 18.4 Z" fill="#cfcfcf"/>
<path d="M2.6 6.6 L12.6 11.4 L12.6 23.6 L2.6 18.4 Z" fill="#9c9c9c"/><path d="M2.6 6.6 L12.6 1.6 L23 6.2 L12.6 11.4 Z" fill="#fafafa"/></g></svg>
<svg style="left:2362px;top:288.6px" width="12" height="7" viewBox="0 0 12 7"><polygon points="0.8,0.4 10.2,0.4 5.5,5.4" fill="#222"/></svg>
<svg style="left:0;top:0" width="2398" height="1294" viewBox="0 0 2398 1294">
<defs>
<linearGradient id="tubeL" x1="0" x2="1" y1="0" y2="1"><stop offset="0" stop-color="#b2b2b2"/><stop offset=".35" stop-color="#8e8e8e"/><stop offset="1" stop-color="#6a6a6a"/></linearGradient>
<linearGradient id="tubeR" x1="0" x2="1" y1="0" y2="0"><stop offset="0" stop-color="#cccccc"/><stop offset="1" stop-color="#c0c0c0"/></linearGradient>
<linearGradient id="beltG" x1="0" x2="1" y1="0" y2="0"><stop offset="0" stop-color="#262626"/><stop offset=".12" stop-color="#1c1c1c"/><stop offset=".9" stop-color="#1f1f1f"/><stop offset="1" stop-color="#161616"/></linearGradient>
<linearGradient id="bossW" x1="0" x2="1" y1="0" y2="0"><stop offset="0" stop-color="#d39e3c"/><stop offset=".45" stop-color="#dca741"/><stop offset="1" stop-color="#e9b247"/></linearGradient>
<filter id="glow" x="-10%" y="-10%" width="120%" height="120%"><feGaussianBlur stdDeviation="1.2"/></filter>
</defs>
<polygon points="1254.6,870 1364,902.5 1364,1011.4 1301,1066 1191.5,1034.6 1191.5,925.1" fill="#bdbdbd" stroke="none" stroke-width="1" stroke-linejoin="round" />
<polygon points="1254.6,979.9 1301,993 1301,956.3 1254.6,943" fill="#ababab" stroke="none" stroke-width="1" stroke-linejoin="round" />
<polygon points="1191.5,925.1 1301,956.3 1301,1066 1191.5,1034.6" fill="rgba(150,150,150,0.35)" stroke="none" stroke-width="1" stroke-linejoin="round" />
<polygon points="1301,956.3 1364,902.5 1364,1011.4 1301,1066" fill="rgba(140,140,140,0.32)" stroke="none" stroke-width="1" stroke-linejoin="round" />
<polygon points="1254.6,870 1364,902.5 1301,956.3 1191.5,925.1" fill="rgba(200,200,200,0.3)" stroke="none" stroke-width="1" stroke-linejoin="round" />
<polygon points="1254.6,979.9 1364,1011.4 1301,1066 1191.5,1034.6" fill="rgba(255,255,255,0.16)" stroke="none" stroke-width="1" stroke-linejoin="round" />
<polygon points="1254.6,979.9 1301,993 1301,956.3 1254.6,943" fill="rgba(120,120,120,0.18)" stroke="none" stroke-width="1" stroke-linejoin="round" />
<polyline points="1254.6,870 1364,902.5" fill="none" stroke="#2a2a2a" stroke-width="1.3" stroke-linejoin="round" />
<polyline points="1364,902.5 1301,956.3" fill="none" stroke="#2a2a2a" stroke-width="1.3" stroke-linejoin="round" />
<polyline points="1301,956.3 1191.5,925.1" fill="none" stroke="#2a2a2a" stroke-width="1.3" stroke-linejoin="round" />
<polyline points="1191.5,925.1 1254.6,870" fill="none" stroke="#2a2a2a" stroke-width="1.3" stroke-linejoin="round" />
<polyline points="1254.6,979.9 1364,1011.4" fill="none" stroke="#2a2a2a" stroke-width="1.3" stroke-linejoin="round" />
<polyline points="1364,1011.4 1301,1066" fill="none" stroke="#2a2a2a" stroke-width="1.3" stroke-linejoin="round" />
<polyline points="1301,1066 1191.5,1034.6" fill="none" stroke="#2a2a2a" stroke-width="1.3" stroke-linejoin="round" />
<polyline points="1191.5,1034.6 1254.6,979.9" fill="none" stroke="#2a2a2a" stroke-width="1.3" stroke-linejoin="round" />
<polyline points="1254.6,870 1254.6,979.9" fill="none" stroke="#2a2a2a" stroke-width="1.3" stroke-linejoin="round" />
<polyline points="1364,902.5 1364,1011.4" fill="none" stroke="#2a2a2a" stroke-width="1.3" stroke-linejoin="round" />
<polyline points="1301,956.3 1301,1066" fill="none" stroke="#2a2a2a" stroke-width="1.3" stroke-linejoin="round" />
<polyline points="1191.5,925.1 1191.5,1034.6" fill="none" stroke="#2a2a2a" stroke-width="1.3" stroke-linejoin="round" />
<circle cx="1277.8" cy="968.2" r="4.6" fill="#fff" stroke="#222" stroke-width="1.3"/><circle cx="1277.8" cy="968.2" r="1.7" fill="#111"/>
<path d="M710 366.5 L966 366.5 C990 368 1002 385 1002 402 C1002 420 988 437 957 437 L725 436.2 C695 436 675.8 420 675.8 401 C675.8 382 690 367 710 366.5 Z" fill="#1e1e1e"/>
<path d="M725 389 L950 390.5 C975 388 987 394 986.5 399 C986 407 975 412 960 412 L725 411 C705 411 692.5 406 692.5 398.5 C692.5 392 705 388.8 725 389 Z" fill="#fff"/>
<path d="M710 369 L966 369.5 C990 371 1000 384 1000 394 C1000 406 985 415 960 415 L725 414 C698 413.5 678.5 405 678.5 392.5 C678.5 380 692 369 710 369 Z" fill="none" stroke="#353535" stroke-width="3"/>
<polyline points="725,415 725,436" fill="none" stroke="#383838" stroke-width="1" stroke-linejoin="round" />
<polyline points="957,416 957,437" fill="none" stroke="#383838" stroke-width="1" stroke-linejoin="round" />
<polygon points="1178.3,285.6 1232.7,299.2 1232.7,569.4 1178.3,555.8" fill="url(#tubeL)" stroke="none" stroke-width="1" stroke-linejoin="round" />
<polygon points="1232.7,299.2 1265,271 1265,549 1232.7,569.4" fill="url(#tubeR)" stroke="none" stroke-width="1" stroke-linejoin="round" />
<polyline points="1232.7,299.2 1232.7,569.4" fill="none" stroke="#8d8d8d" stroke-width="1" stroke-linejoin="round" />
<ellipse cx="1204.8" cy="376.6" rx="5.6" ry="4.6" fill="#e8e8e8" stroke="#444" stroke-width="1.1" transform="rotate(20 1204.8 376.6)"/><ellipse cx="1205.8" cy="377.40000000000003" rx="3.6" ry="3" fill="#9a9a9a" transform="rotate(20 1205.8 377.40000000000003)"/>
<ellipse cx="1204.8" cy="404" rx="5.6" ry="4.6" fill="#e8e8e8" stroke="#444" stroke-width="1.1" transform="rotate(20 1204.8 404)"/><ellipse cx="1205.8" cy="404.8" rx="3.6" ry="3" fill="#9a9a9a" transform="rotate(20 1205.8 404.8)"/>
<ellipse cx="1204.8" cy="431" rx="5.6" ry="4.6" fill="#e8e8e8" stroke="#444" stroke-width="1.1" transform="rotate(20 1204.8 431)"/><ellipse cx="1205.8" cy="431.8" rx="3.6" ry="3" fill="#9a9a9a" transform="rotate(20 1205.8 431.8)"/>
<ellipse cx="1204.8" cy="458" rx="5.6" ry="4.6" fill="#e8e8e8" stroke="#444" stroke-width="1.1" transform="rotate(20 1204.8 458)"/><ellipse cx="1205.8" cy="458.8" rx="3.6" ry="3" fill="#9a9a9a" transform="rotate(20 1205.8 458.8)"/>
<ellipse cx="1204.8" cy="485" rx="5.6" ry="4.6" fill="#e8e8e8" stroke="#444" stroke-width="1.1" transform="rotate(20 1204.8 485)"/><ellipse cx="1205.8" cy="485.8" rx="3.6" ry="3" fill="#9a9a9a" transform="rotate(20 1205.8 485.8)"/>
<ellipse cx="1204.8" cy="513" rx="5.6" ry="4.6" fill="#e8e8e8" stroke="#444" stroke-width="1.1" transform="rotate(20 1204.8 513)"/><ellipse cx="1205.8" cy="513.8" rx="3.6" ry="3" fill="#9a9a9a" transform="rotate(20 1205.8 513.8)"/>
<ellipse cx="1204.8" cy="541" rx="5.6" ry="4.6" fill="#e8e8e8" stroke="#444" stroke-width="1.1" transform="rotate(20 1204.8 541)"/><ellipse cx="1205.8" cy="541.8" rx="3.6" ry="3" fill="#9a9a9a" transform="rotate(20 1205.8 541.8)"/>
<ellipse cx="1248.2" cy="315" rx="3" ry="6" fill="#8a8a8a" stroke="#3a3a3a" stroke-width="1.1" transform="rotate(22 1248.2 315)"/><ellipse cx="1247.4" cy="315.6" rx="1.5" ry="4.2" fill="#dcdcdc" transform="rotate(22 1247.4 315.6)"/>
<ellipse cx="1248.2" cy="343" rx="3" ry="6" fill="#8a8a8a" stroke="#3a3a3a" stroke-width="1.1" transform="rotate(22 1248.2 343)"/><ellipse cx="1247.4" cy="343.6" rx="1.5" ry="4.2" fill="#dcdcdc" transform="rotate(22 1247.4 343.6)"/>
<ellipse cx="1248.2" cy="370.9" rx="3" ry="6" fill="#8a8a8a" stroke="#3a3a3a" stroke-width="1.1" transform="rotate(22 1248.2 370.9)"/><ellipse cx="1247.4" cy="371.5" rx="1.5" ry="4.2" fill="#dcdcdc" transform="rotate(22 1247.4 371.5)"/>
<ellipse cx="1248.2" cy="398" rx="3" ry="6" fill="#8a8a8a" stroke="#3a3a3a" stroke-width="1.1" transform="rotate(22 1248.2 398)"/><ellipse cx="1247.4" cy="398.6" rx="1.5" ry="4.2" fill="#dcdcdc" transform="rotate(22 1247.4 398.6)"/>
<ellipse cx="1248.2" cy="425.5" rx="3" ry="6" fill="#8a8a8a" stroke="#3a3a3a" stroke-width="1.1" transform="rotate(22 1248.2 425.5)"/><ellipse cx="1247.4" cy="426.1" rx="1.5" ry="4.2" fill="#dcdcdc" transform="rotate(22 1247.4 426.1)"/>
<ellipse cx="1248.2" cy="453" rx="3" ry="6" fill="#8a8a8a" stroke="#3a3a3a" stroke-width="1.1" transform="rotate(22 1248.2 453)"/><ellipse cx="1247.4" cy="453.6" rx="1.5" ry="4.2" fill="#dcdcdc" transform="rotate(22 1247.4 453.6)"/>
<ellipse cx="1248.2" cy="480" rx="3" ry="6" fill="#8a8a8a" stroke="#3a3a3a" stroke-width="1.1" transform="rotate(22 1248.2 480)"/><ellipse cx="1247.4" cy="480.6" rx="1.5" ry="4.2" fill="#dcdcdc" transform="rotate(22 1247.4 480.6)"/>
<ellipse cx="1248.2" cy="508" rx="3" ry="6" fill="#8a8a8a" stroke="#3a3a3a" stroke-width="1.1" transform="rotate(22 1248.2 508)"/><ellipse cx="1247.4" cy="508.6" rx="1.5" ry="4.2" fill="#dcdcdc" transform="rotate(22 1247.4 508.6)"/>
<ellipse cx="1248.2" cy="535" rx="3" ry="6" fill="#8a8a8a" stroke="#3a3a3a" stroke-width="1.1" transform="rotate(22 1248.2 535)"/><ellipse cx="1247.4" cy="535.6" rx="1.5" ry="4.2" fill="#dcdcdc" transform="rotate(22 1247.4 535.6)"/>
<polygon points="1178.3,340 1189,336 1200,350 1194,366 1178.3,372" fill="rgba(255,255,255,0.5)" stroke="none" stroke-width="1" stroke-linejoin="round" />
<polygon points="995,289.5 1184,331.3 1197,338 1180,347 997,312.7 975,306 975,294" fill="#1b1b1b" stroke="none" stroke-width="1" stroke-linejoin="round" />
<path d="M982 316 L1120.8 361 L1129.5 365.4 L1139.4 369.1 L1159.1 370.3 L1177.7 369.7 C1184 368 1188 365 1191.3 361 C1194 357 1196 353 1196.2 348.7 L1193 342 L1188 333 L1184 328 L1198.7 333.8 L1203.7 338.8 L1208.6 346.1 C1209 350 1209 355 1207.6 361 C1206.5 366 1204 372 1199.3 377.7 C1195 382 1190 386 1182.6 389.7 C1178 392 1172 394 1164 394.4 L1145.5 394.4 L1126.9 391.6 L1108.4 383.2 L1075 368 L1000 336 L975 326 Z" fill="#1d1d1d"/>
<path d="M1129.5 369 L1139.4 373 L1159.1 374.4 L1177.7 373.6 C1186 371 1192 366 1195 360" fill="none" stroke="#3a3a3a" stroke-width="1"/>
<polyline points="1126.9,371 1126.9,391.6" fill="none" stroke="#333" stroke-width="1" stroke-linejoin="round" />
<polygon points="911.5,290 926,296 926,312 911.5,312" fill="#2f7a35" stroke="none" stroke-width="1" stroke-linejoin="round" />
<polygon points="711.6,366.4 710.7,361.5 711.6,358.5 714,356.2 719.5,354.8 911.3,312.3 911.5,275.7 913.4,268.2 920.8,258.3 931.9,249.7 944.3,243.5 959.1,238.6 974,235.5 988.8,234.2 993.8,234 1213,246.6 1261.8,260.9 1261.8,273.9 1232.7,299.2 1188.8,328.9 1178.6,335 1178.6,348.3 1071,368.4 1000,383.2 965,390 949.4,390.7 727,383.3 719.5,381.7 714,379.2 711.2,375.7 711.3,371" fill="rgba(49,53,57,0.92)" stroke="#121416" stroke-width="1.25" stroke-linejoin="round" />
<polygon points="721.2,353.9 911.3,311.3 930,322 955,377 949.4,378 716,366" fill="rgba(80,85,92,0.25)" stroke="none" stroke-width="1" stroke-linejoin="round" />
<path d="M911.5 275.7 C913 262 950 234 993.8 234 L1213 246.6 L1261.8 260.9 L1261.8 273.9 L1258.3 271 L1212.8 258 L994 247.8 C950 248 914 268 912.4 290 Z" fill="rgba(20,22,25,0.38)"/>
<path d="M911.5 281.8 C913 262 950 248 994 247.8 L1212.8 258 L1258.3 271" fill="none" stroke="#0b0c0e" stroke-width="1.2"/>
<polyline points="993.8,234 993.8,247.8" fill="none" stroke="#0b0c0e" stroke-width="1.1" stroke-linejoin="round" />
<polyline points="1213,246.6 1213,258" fill="none" stroke="#0b0c0e" stroke-width="1.1" stroke-linejoin="round" />
<polygon points="1048.0,272.3 1044.6,268.6 1040.5,265.1 1035.7,261.8 1030.2,258.9 1024.1,256.3 1017.5,254.1 1010.4,252.3 1003.0,250.9 995.4,250.0 987.6,249.6 979.8,249.6 972.0,250.1 964.4,251.0 957.0,252.4 950.0,254.2 943.4,256.5 937.4,259.1 931.9,262.1 927.1,265.3 923.1,268.9 919.8,272.6 917.4,276.6 915.8,280.6 915.0,284.7 915.2,288.9 916.3,293.0 918.2,297.0 921.0,300.8 924.5,304.5 928.9,308.0 933.9,311.1 939.6,314.0 945.9,316.4 952.7,318.5 959.8,320.2 967.3,321.4 975.0,322.2 982.8,322.5 990.6,322.3 998.3,321.7 993.7,309.0 988.5,309.4 983.2,309.5 977.9,309.3 972.8,308.8 967.7,307.9 962.9,306.8 958.3,305.3 954.1,303.7 950.3,301.7 946.9,299.5 943.9,297.2 941.5,294.7 939.7,292.0 938.4,289.3 937.6,286.5 937.5,283.6 938.0,280.8 939.1,278.0 940.7,275.3 942.9,272.8 945.7,270.3 948.9,268.1 952.6,266.1 956.7,264.3 961.1,262.7 965.8,261.5 970.8,260.5 975.9,259.9 981.2,259.5 986.4,259.5 991.7,259.8 996.8,260.5 1001.8,261.4 1006.5,262.6 1011.0,264.1 1015.1,265.9 1018.8,267.9 1022.1,270.2 1024.9,272.6 1027.1,275.1" fill="rgba(72,112,78,0.34)" stroke="#0b0c0e" stroke-width="1"/>
<ellipse cx="987.3" cy="271.5" rx="31" ry="13.5" fill="#2c2f33" stroke="#0b0c0e" stroke-width="1.1"/>
<path d="M959.5 279.5 Q987 262 1014.8 279.5 Q987 296 959.5 279.5 Z" fill="#2c7a34"/>
<path d="M962 280 Q987 270 1012 280" fill="none" stroke="#3c9a46" stroke-width="2" opacity=".5"/>
<path d="M956.3 271.5 A31 13.5 0 0 0 1018.3 271.5 L1018.3 285 A31 13.5 0 0 1 956.3 285 Z" fill="none" stroke="#0b0c0e" stroke-width="1"/>
<ellipse cx="986.6" cy="301.6" rx="26.4" ry="11" fill="none" stroke="#0b0c0e" stroke-width="1.1"/>
<ellipse cx="986.6" cy="303" rx="15" ry="6.6" fill="none" stroke="#0b0c0e" stroke-width="1"/>
<polyline points="720.4,355 720.4,367" fill="none" stroke="#0b0c0e" stroke-width="1" stroke-linejoin="round" />
<polyline points="727.4,367.5 727.4,383.5" fill="none" stroke="#0b0c0e" stroke-width="1" stroke-linejoin="round" />
<polyline points="732.5,362.7 905,323.9 917,322" fill="none" stroke="#0b0c0e" stroke-width="1.1" stroke-linejoin="round" />
<polyline points="711.6,366.4 780,366.2 949.4,378 957,377 1000,370 1174,336" fill="none" stroke="#0b0c0e" stroke-width="1.1" stroke-linejoin="round" />
<polyline points="727,368 949.4,380.5" fill="none" stroke="#0b0c0e" stroke-width="0.9" stroke-linejoin="round" />
<polyline points="911.8,283 911.8,343.7" fill="none" stroke="#0b0c0e" stroke-width="1" stroke-linejoin="round" />
<path d="M911.8 343.7 C912 360 935 372 985 374" fill="none" stroke="#0b0c0e" stroke-width="1"/>
<polyline points="987.5,320 987.5,374" fill="none" stroke="#0b0c0e" stroke-width="1" stroke-linejoin="round" />
<polyline points="997.7,320 997.7,372" fill="none" stroke="#0b0c0e" stroke-width="1" stroke-linejoin="round" />
<polyline points="995,289.5 1184,331.3" fill="none" stroke="#0b0c0e" stroke-width="1.3" stroke-linejoin="round" />
<polyline points="998.7,293.6 1176.7,333.6" fill="none" stroke="#0b0c0e" stroke-width="1" stroke-linejoin="round" />
<polyline points="997,312.7 1174.8,344.2" fill="none" stroke="#0b0c0e" stroke-width="1.1" stroke-linejoin="round" />
<polyline points="990,318 1126.6,366.5" fill="none" stroke="#0b0c0e" stroke-width="1.3" stroke-linejoin="round" />
<polyline points="996,316 1122,357.2" fill="none" stroke="#0b0c0e" stroke-width="1" stroke-linejoin="round" />
<polyline points="1000,327 1090,371" fill="none" stroke="#0b0c0e" stroke-width="1" stroke-linejoin="round" />
<path d="M995 289.5 C962 284 956 314 990 318" fill="none" stroke="#0b0c0e" stroke-width="1.2"/>
<polyline points="1000,383 1178,348" fill="none" stroke="#0b0c0e" stroke-width="1" stroke-linejoin="round" />
<polyline points="712,366.5 966,367 990,372" fill="none" stroke="#0b0c0e" stroke-width="1" stroke-linejoin="round" />
<path d="M912.3 294.2 Q922 296 927.1 301.6 L928 309 L912.3 311.8 Z" fill="#2f8a3b"/>
<polyline points="911.8,283 911.8,312" fill="none" stroke="#0b0c0e" stroke-width="1" stroke-linejoin="round" />
<ellipse cx="727.1" cy="361.9" rx="5.4" ry="2.6" fill="none" stroke="#0b0c0e" stroke-width="1"/>
<ellipse cx="727.1" cy="374.9" rx="5.4" ry="2.6" fill="none" stroke="#0b0c0e" stroke-width="1"/>
<ellipse cx="931" cy="255" rx="5.4" ry="2.6" fill="none" stroke="#0b0c0e" stroke-width="1"/>
<ellipse cx="931" cy="269" rx="5.4" ry="2.6" fill="none" stroke="#0b0c0e" stroke-width="1"/>
<ellipse cx="1042" cy="255" rx="5.4" ry="2.6" fill="none" stroke="#0b0c0e" stroke-width="1"/>
<ellipse cx="1042" cy="269" rx="5.4" ry="2.6" fill="none" stroke="#0b0c0e" stroke-width="1"/>
<ellipse cx="986.6" cy="304.4" rx="5.4" ry="2.6" fill="none" stroke="#0b0c0e" stroke-width="1"/>
<ellipse cx="987.5" cy="316.8" rx="5.4" ry="2.6" fill="none" stroke="#0b0c0e" stroke-width="1"/>
<ellipse cx="950" cy="362.5" rx="5.4" ry="2.6" fill="none" stroke="#0b0c0e" stroke-width="1"/>
<ellipse cx="950" cy="376.5" rx="5.4" ry="2.6" fill="none" stroke="#0b0c0e" stroke-width="1"/>
<ellipse cx="1157.5" cy="320" rx="5.4" ry="2.6" fill="none" stroke="#0b0c0e" stroke-width="1"/>
<ellipse cx="1157.5" cy="333.5" rx="5.4" ry="2.6" fill="none" stroke="#0b0c0e" stroke-width="1"/>
<ellipse cx="1218" cy="258" rx="5.4" ry="2.6" fill="none" stroke="#0b0c0e" stroke-width="1"/>
<ellipse cx="1239" cy="264" rx="5.4" ry="2.6" fill="none" stroke="#0b0c0e" stroke-width="1"/>
<polyline points="1178.3,285.6 1178.3,348" fill="none" stroke="#0b0c0e" stroke-width="1" stroke-linejoin="round" />
<polyline points="1178.3,285.6 1232.7,299.2" fill="none" stroke="#0b0c0e" stroke-width="1" stroke-linejoin="round" />
<polygon points="1191.9,282.1 1208.6,264.5 1253,277.5 1229,297" fill="#c9983e" stroke="#8d6a24" stroke-width="0.8" stroke-linejoin="round" />
<ellipse cx="1203" cy="281" rx="4.2" ry="2.4" fill="#d7a548" stroke="#b8872f" stroke-width=".7"/>
<ellipse cx="1214" cy="272.5" rx="4.2" ry="2.4" fill="#d7a548" stroke="#b8872f" stroke-width=".7"/>
<ellipse cx="1223" cy="284.5" rx="4.2" ry="2.4" fill="#d7a548" stroke="#b8872f" stroke-width=".7"/>
<ellipse cx="1232" cy="276" rx="4.2" ry="2.4" fill="#d7a548" stroke="#b8872f" stroke-width=".7"/>
<ellipse cx="1241" cy="281" rx="4.2" ry="2.4" fill="#d7a548" stroke="#b8872f" stroke-width=".7"/>
<ellipse cx="1221" cy="277.5" rx="4.2" ry="2.4" fill="#d7a548" stroke="#b8872f" stroke-width=".7"/>
<polygon points="1187.2,280.3 1206.7,263.6 1217.8,262.3 1254,273.8 1256.8,277.5 1256.8,319.2 1234.5,338.7 1227.1,341.5 1189.1,329.4 1187.2,325.7" fill="none" stroke="#f5b942" stroke-width="2.6" stroke-linejoin="round" />
<ellipse cx="1205.5" cy="320" rx="4.2" ry="2.6" fill="#d3a042" transform="rotate(35 1205.5 320)"/>
<ellipse cx="1205.6" cy="513.6" rx="3.6" ry="3" fill="#e8ad3c" transform="rotate(20 1205.6 513.6)"/>
<ellipse cx="1205.6" cy="541.6" rx="3.6" ry="3" fill="#e8ad3c" transform="rotate(20 1205.6 541.6)"/>
<ellipse cx="1247.6" cy="508.6" rx="1.5" ry="4" fill="#e8ad3c" transform="rotate(22 1247.6 508.6)"/>
<ellipse cx="1247.6" cy="535.6" rx="1.5" ry="4" fill="#e8ad3c" transform="rotate(22 1247.6 535.6)"/>
<ellipse cx="1247.6" cy="315.6" rx="1.5" ry="4" fill="#e8ad3c" transform="rotate(22 1247.6 315.6)"/>
<polygon points="711.6,656.4 710.7,650 711.6,647 714,644.4 719.7,642.7 912.6,600 1177,541.6 1178.3,555.8 1232.7,569.4 1265,549 1261.4,562 1232.7,588 1184.4,627 1178.9,635.3 965,679 955,680.5 726,671.2 719.5,669.8 714,667 711,663 711,659.5" fill="rgba(49,53,57,0.92)" stroke="#121416" stroke-width="1.25" stroke-linejoin="round" />
<polygon points="712,652 719.7,642.7 912.6,600 1177,541.6 1232.7,569.4 1258,552 1225,580 1175,622 957,664 947.8,666.8 720.6,656.6" fill="rgba(98,103,110,0.55)" stroke="none" stroke-width="1" stroke-linejoin="round" />
<polyline points="711.5,656 720.6,656.6 947.8,666.8 957,664 1175,622 1225,580 1258,552" fill="none" stroke="#0b0c0e" stroke-width="1" stroke-linejoin="round" />
<polyline points="720.6,656.6 912,612" fill="none" stroke="#0b0c0e" stroke-width="1" stroke-linejoin="round" />
<polyline points="719.7,642.7 719.7,670.5" fill="none" stroke="#0b0c0e" stroke-width="0.8" stroke-linejoin="round" />
<polyline points="947.8,666.8 947.8,680" fill="none" stroke="#0b0c0e" stroke-width="0.8" stroke-linejoin="round" />
<polyline points="959,664 959,680" fill="none" stroke="#0b0c0e" stroke-width="0.8" stroke-linejoin="round" />
<polyline points="1178.9,621 1178.9,635" fill="none" stroke="#0b0c0e" stroke-width="0.8" stroke-linejoin="round" />
<polyline points="1232.7,573 1232.7,588" fill="none" stroke="#0b0c0e" stroke-width="0.8" stroke-linejoin="round" />
<ellipse cx="727.6" cy="649.5" rx="5.4" ry="2.6" fill="none" stroke="#0b0c0e" stroke-width="1"/>
<ellipse cx="727.6" cy="662.5" rx="5.4" ry="2.6" fill="none" stroke="#0b0c0e" stroke-width="1"/>
<ellipse cx="950" cy="664.5" rx="5.4" ry="2.6" fill="none" stroke="#0b0c0e" stroke-width="1"/>
<ellipse cx="1154" cy="623" rx="5.4" ry="2.6" fill="none" stroke="#0b0c0e" stroke-width="1"/>
<ellipse cx="1224" cy="576" rx="5.4" ry="2.6" fill="none" stroke="#0b0c0e" stroke-width="1"/>
<path d="M900.5 621.4 C901 610 910 600 921.9 595.4 L1145.5 549 C1160 546.5 1180 549 1191.9 556.5 C1203 563 1209 575 1208.6 586.1 C1208 600 1198 613 1182.6 617.7 L1030 652 L968.2 659.4 C950 661 925 660 912.6 652.9 C903 646 900 634 900.5 621.4 Z" fill="#1c1c1c" stroke="#0c0c0c" stroke-width="1"/>
<path d="M918.2 628.8 C918 624 925 620 936.7 619.5 L1030 599.1 L1145.5 575 C1160 572.5 1180 574 1191.9 580.6 C1198 585 1197 594 1190 597.3 C1180 602 1172 605 1164 606.5 L1030 626 L968.2 637.1 C950 640 935 640 931.1 636.2 C925 634 919 633 918.2 628.8 Z" fill="#50555b"/>
<path d="M904 624 C903 610 912 601 925 597.5 L1147 552 C1168 549 1190 554 1200 567 C1207 577 1206 588 1199 596 C1193 602 1185 605 1177 606.5 L971 642 C955 644.5 938 643.5 925 639 C912 635 905 630 904 624 Z" fill="none" stroke="#343434" stroke-width="3.6"/>
<polygon points="1208.6,494.3 1219.7,494 1252.2,504.5 1255,510 1255,550.9 1234.5,571.3 1223.4,571.3 1190,562 1187.8,557.4 1187.8,512.9 1193.7,506.4" fill="none" stroke="#f5b942" stroke-width="2.6" stroke-linejoin="round" />
<polyline points="936.7,600 936.7,619.5" fill="none" stroke="#333" stroke-width="1" stroke-linejoin="round" />
<polyline points="1143,555 1143,575" fill="none" stroke="#333" stroke-width="1" stroke-linejoin="round" />
<polyline points="968.2,640 968.2,659.4" fill="none" stroke="#333" stroke-width="1" stroke-linejoin="round" />
<polyline points="1177,600 1177,619" fill="none" stroke="#333" stroke-width="1" stroke-linejoin="round" />
<polygon points="1689.7,366 1700.3,366 1724.9,374.1 1740,380.5 1760,390.3 1871.6,468.2 1884.8,481.4 1886.1,486.6 1886.1,568.1 1880,578 1869,585.2 1842.7,593 1816.5,595.7 1792.8,594.3 1800.7,649.5 1799,662 1792.8,667.9 1779.7,669.2 1748.2,652.1 1640.4,571 1640.4,568.1 1607.8,447 1608,441.5 1609.6,438.4 1684,370.2 1687,367.2" fill="#f7cf7d" stroke="#f7cf7d" stroke-width="5" stroke-linejoin="round" filter="url(#glow)"/>
<polygon points="1660.1,676.5 1609.8,726.5 1607.9,730 1607.6,738 1640.4,857.6 1648.3,865.4 1777,954.8 1790.2,960 1800.7,952.2 1802,939 1748.2,676.3 1745.5,673.6 1715.3,697.3 1660.1,681.5" fill="#f7cf7d" stroke="#f7cf7d" stroke-width="5" stroke-linejoin="round" filter="url(#glow)"/>
<polygon points="1660.1,560 1745.5,560 1745.5,673.6 1715.3,697.3 1660.1,681.5" fill="#f7cf7d" stroke="#f7cf7d" stroke-width="5" stroke-linejoin="round" filter="url(#glow)"/>
<polygon points="1660.1,676.5 1609.8,726.5 1607.9,730 1607.6,738 1640.4,857.6 1648.3,865.4 1777,954.8 1790.2,960 1800.7,952.2 1802,939 1748.2,676.3 1745.5,673.6 1715.3,697.3 1660.1,681.5" fill="#f0b94e" stroke="#e3a83a" stroke-width="1.2" stroke-linejoin="round" />
<polygon points="1689.7,366 1700.3,366 1724.9,374.1 1740,380.5 1760,390.3 1871.6,468.2 1884.8,481.4 1886.1,486.6 1886.1,568.1 1880,578 1869,585.2 1842.7,593 1816.5,595.7 1792.8,594.3 1800.7,649.5 1799,662 1792.8,667.9 1779.7,669.2 1748.2,652.1 1640.4,571 1640.4,568.1 1607.8,447 1608,441.5 1609.6,438.4 1684,370.2 1687,367.2" fill="#f0b94e" stroke="#e3a83a" stroke-width="1.2" stroke-linejoin="round" />
<polygon points="1660.1,586.5 1715.3,628.5 1715.3,697.3 1660.1,681.5" fill="#c4953b" stroke="none" stroke-width="1" stroke-linejoin="round" />
<polygon points="1660.1,409.1 1715.3,420.9 1715.3,628.5 1660.1,586.5" fill="#eab248" stroke="none" stroke-width="1" stroke-linejoin="round" />
<polygon points="1715.3,420.9 1744.2,397.3 1745.5,673.6 1715.3,697.3" fill="#f0b94e" stroke="none" stroke-width="1" stroke-linejoin="round" />
<polyline points="1660.1,409.1 1660.1,681.5 1715.3,697.3 1745.5,673.6 1745.5,397.3" fill="none" stroke="#936c1f" stroke-width="1" stroke-linejoin="round" />
<polyline points="1715.3,420.9 1715.3,697.3" fill="none" stroke="#936c1f" stroke-width="1" stroke-linejoin="round" />
<polygon points="1660.1,409.1 1693,384.2 1744.2,397.3 1715.3,420.9" fill="#e8b149" stroke="#936c1f" stroke-width="1" stroke-linejoin="round" />
<polygon points="1671,407 1695,389 1733,399 1711,416" fill="none" stroke="#936c1f" stroke-width="1.15" stroke-linejoin="round" />
<ellipse cx="1686" cy="404" rx="4.4" ry="2.6" fill="none" stroke="#936c1f" stroke-width="1"/>
<ellipse cx="1698" cy="396" rx="4.4" ry="2.6" fill="none" stroke="#936c1f" stroke-width="1"/>
<ellipse cx="1708" cy="406" rx="4.4" ry="2.6" fill="none" stroke="#936c1f" stroke-width="1"/>
<ellipse cx="1719" cy="399" rx="4.4" ry="2.6" fill="none" stroke="#936c1f" stroke-width="1"/>
<ellipse cx="1703" cy="401" rx="4.4" ry="2.6" fill="none" stroke="#936c1f" stroke-width="1"/>
<ellipse cx="1687.6" cy="443.0" rx="4.8" ry="4.4" fill="#e2aa44" stroke="#936c1f" stroke-width="1.1" transform="rotate(25 1687.6 443.0)"/>
<ellipse cx="1687.6" cy="470.4" rx="4.8" ry="4.4" fill="#e2aa44" stroke="#936c1f" stroke-width="1.1" transform="rotate(25 1687.6 470.4)"/>
<ellipse cx="1687.6" cy="497.8" rx="4.8" ry="4.4" fill="#e2aa44" stroke="#936c1f" stroke-width="1.1" transform="rotate(25 1687.6 497.8)"/>
<ellipse cx="1687.6" cy="525.2" rx="4.8" ry="4.4" fill="#e2aa44" stroke="#936c1f" stroke-width="1.1" transform="rotate(25 1687.6 525.2)"/>
<ellipse cx="1687.6" cy="552.6" rx="4.8" ry="4.4" fill="#e2aa44" stroke="#936c1f" stroke-width="1.1" transform="rotate(25 1687.6 552.6)"/>
<ellipse cx="1687.6" cy="580.0" rx="4.8" ry="4.4" fill="#e2aa44" stroke="#936c1f" stroke-width="1.1" transform="rotate(25 1687.6 580.0)"/>
<ellipse cx="1687.6" cy="607.4" rx="4.8" ry="4.4" fill="#e2aa44" stroke="#936c1f" stroke-width="1.1" transform="rotate(25 1687.6 607.4)"/>
<ellipse cx="1687.6" cy="634.8" rx="4.8" ry="4.4" fill="#e2aa44" stroke="#936c1f" stroke-width="1.1" transform="rotate(25 1687.6 634.8)"/>
<ellipse cx="1687.6" cy="662.2" rx="4.8" ry="4.4" fill="#e2aa44" stroke="#936c1f" stroke-width="1.1" transform="rotate(25 1687.6 662.2)"/>
<ellipse cx="1687.6" cy="689.6" rx="4.8" ry="4.4" fill="#e2aa44" stroke="#936c1f" stroke-width="1.1" transform="rotate(25 1687.6 689.6)"/>
<ellipse cx="1731" cy="435.0" rx="2.4" ry="5.4" fill="#e2aa44" stroke="#936c1f" stroke-width="1.1" transform="rotate(22 1731 435.0)"/>
<ellipse cx="1731" cy="462.4" rx="2.4" ry="5.4" fill="#e2aa44" stroke="#936c1f" stroke-width="1.1" transform="rotate(22 1731 462.4)"/>
<ellipse cx="1731" cy="489.8" rx="2.4" ry="5.4" fill="#e2aa44" stroke="#936c1f" stroke-width="1.1" transform="rotate(22 1731 489.8)"/>
<ellipse cx="1731" cy="517.2" rx="2.4" ry="5.4" fill="#e2aa44" stroke="#936c1f" stroke-width="1.1" transform="rotate(22 1731 517.2)"/>
<ellipse cx="1731" cy="544.6" rx="2.4" ry="5.4" fill="#e2aa44" stroke="#936c1f" stroke-width="1.1" transform="rotate(22 1731 544.6)"/>
<ellipse cx="1731" cy="572.0" rx="2.4" ry="5.4" fill="#e2aa44" stroke="#936c1f" stroke-width="1.1" transform="rotate(22 1731 572.0)"/>
<ellipse cx="1731" cy="599.4" rx="2.4" ry="5.4" fill="#e2aa44" stroke="#936c1f" stroke-width="1.1" transform="rotate(22 1731 599.4)"/>
<ellipse cx="1731" cy="626.8" rx="2.4" ry="5.4" fill="#e2aa44" stroke="#936c1f" stroke-width="1.1" transform="rotate(22 1731 626.8)"/>
<ellipse cx="1731" cy="654.2" rx="2.4" ry="5.4" fill="#e2aa44" stroke="#936c1f" stroke-width="1.1" transform="rotate(22 1731 654.2)"/>
<ellipse cx="1731" cy="681.6" rx="2.4" ry="5.4" fill="#e2aa44" stroke="#936c1f" stroke-width="1.1" transform="rotate(22 1731 681.6)"/>
<polyline points="1689,367 1689,381 1613.5,447" fill="none" stroke="#936c1f" stroke-width="1.15" stroke-linejoin="round" />
<polyline points="1613.5,437.5 1613.5,448" fill="none" stroke="#936c1f" stroke-width="1.15" stroke-linejoin="round" />
<polyline points="1613.5,447 1644.4,565" fill="none" stroke="#936c1f" stroke-width="1.15" stroke-linejoin="round" />
<polyline points="1741,381 1743.5,391 1871,481 1884.8,481.4" fill="none" stroke="#936c1f" stroke-width="1.15" stroke-linejoin="round" />
<polyline points="1643,560.2 1790.2,649.5" fill="none" stroke="#936c1f" stroke-width="1.15" stroke-linejoin="round" />
<polyline points="1640.4,569 1779.7,669.2" fill="none" stroke="#936c1f" stroke-width="1.15" stroke-linejoin="round" />
<polyline points="1745.5,640 1779,658 1792.8,655 1800.7,649.5" fill="none" stroke="#936c1f" stroke-width="1.15" stroke-linejoin="round" />
<polyline points="1715.3,613 1745.5,640" fill="none" stroke="#936c1f" stroke-width="1.15" stroke-linejoin="round" />
<path d="M1779.7 544.4 C1815 543 1865 530 1886.1 507.6 L1886.1 568.1 C1880 585 1840 596 1792.8 594.3 Z" fill="url(#bossW)"/>
<path d="M1744.2 520.8 C1750 535 1765 541 1779.7 544.4 L1792.8 594.3 M1779.7 544.4 C1815 543 1865 530 1886.1 507.6" fill="none" stroke="#936c1f" stroke-width="1"/>
<ellipse cx="1811.2" cy="502.4" rx="31.5" ry="19.7" fill="#e6ae46" stroke="#936c1f" stroke-width="1"/>
<path d="M1800 487 C1835 480 1845 500 1838 512 C1828 525 1805 522 1800 519 Z" fill="#cf9c3d"/>
<ellipse cx="1811.2" cy="515" rx="31.5" ry="19.7" fill="none" stroke="#936c1f" stroke-width=".9"/>
<polygon points="1783.6,498.5 1799.4,491.9 1799.4,506.3" fill="#fff" stroke="none" stroke-width="1" stroke-linejoin="round" />
<path d="M1744.2 520.8 C1744 505 1760 478 1816 470 C1850 468 1880 482 1884 500" fill="none" stroke="#936c1f" stroke-width="1"/>
<polyline points="1799.4,470 1799.4,560" fill="none" stroke="#936c1f" stroke-width="1" stroke-linejoin="round" />
<polyline points="1811,472 1811,530" fill="none" stroke="#936c1f" stroke-width="1" stroke-linejoin="round" />
<path d="M1745.5 576 C1760 590 1780 596 1792.8 594.3" fill="none" stroke="#936c1f" stroke-width=".9"/>
<ellipse cx="1810.6" cy="459" rx="6" ry="3.4" fill="none" stroke="#936c1f" stroke-width="1.1"/>
<ellipse cx="1810.6" cy="472.5" rx="6" ry="3.4" fill="none" stroke="#936c1f" stroke-width="1.1"/>
<ellipse cx="1755.6" cy="507" rx="6" ry="3.4" fill="none" stroke="#936c1f" stroke-width="1.1"/>
<ellipse cx="1755.6" cy="521" rx="6" ry="3.4" fill="none" stroke="#936c1f" stroke-width="1.1"/>
<ellipse cx="1865.6" cy="507" rx="6" ry="3.4" fill="none" stroke="#936c1f" stroke-width="1.1"/>
<ellipse cx="1865.6" cy="521" rx="6" ry="3.4" fill="none" stroke="#936c1f" stroke-width="1.1"/>
<ellipse cx="1639.4" cy="441.5" rx="6" ry="3.4" fill="none" stroke="#936c1f" stroke-width="1.1"/>
<ellipse cx="1639.4" cy="455.5" rx="6" ry="3.4" fill="none" stroke="#936c1f" stroke-width="1.1"/>
<ellipse cx="1670" cy="552" rx="6" ry="3.4" fill="none" stroke="#936c1f" stroke-width="1.1"/>
<ellipse cx="1670" cy="566" rx="6" ry="3.4" fill="none" stroke="#936c1f" stroke-width="1.1"/>
<ellipse cx="1784.6" cy="648.4" rx="6" ry="3.4" fill="none" stroke="#936c1f" stroke-width="1.1"/>
<ellipse cx="1784.6" cy="662.4" rx="6" ry="3.4" fill="none" stroke="#936c1f" stroke-width="1.1"/>
<polyline points="1613.2,725 1613.4,737 1645,858.5 1648.3,865.4" fill="none" stroke="#936c1f" stroke-width="1.15" stroke-linejoin="round" />
<polyline points="1613.4,737 1660,693" fill="none" stroke="#936c1f" stroke-width="1.15" stroke-linejoin="round" />
<polyline points="1645,858 1775,946 1790,948 1800.7,941" fill="none" stroke="#936c1f" stroke-width="1.15" stroke-linejoin="round" />
<polyline points="1745.5,678 1797,940" fill="none" stroke="#936c1f" stroke-width="1.15" stroke-linejoin="round" />
<polyline points="1775,946 1775,955" fill="none" stroke="#936c1f" stroke-width="1" stroke-linejoin="round" />
<ellipse cx="1639.4" cy="729" rx="6" ry="3.4" fill="none" stroke="#936c1f" stroke-width="1.1"/>
<ellipse cx="1639.4" cy="743" rx="6" ry="3.4" fill="none" stroke="#936c1f" stroke-width="1.1"/>
<ellipse cx="1670" cy="840" rx="6" ry="3.4" fill="none" stroke="#936c1f" stroke-width="1.1"/>
<ellipse cx="1670" cy="854" rx="6" ry="3.4" fill="none" stroke="#936c1f" stroke-width="1.1"/>
<ellipse cx="1784.6" cy="935.4" rx="6" ry="3.4" fill="none" stroke="#936c1f" stroke-width="1.1"/>
<ellipse cx="1784.6" cy="949.4" rx="6" ry="3.4" fill="none" stroke="#936c1f" stroke-width="1.1"/>
<ellipse cx="1686" cy="691" rx="6" ry="3.4" fill="none" stroke="#936c1f" stroke-width="1.1"/>
<ellipse cx="1707" cy="697" rx="6" ry="3.4" fill="none" stroke="#936c1f" stroke-width="1.1"/>
</svg>
</div>
</body></html>
